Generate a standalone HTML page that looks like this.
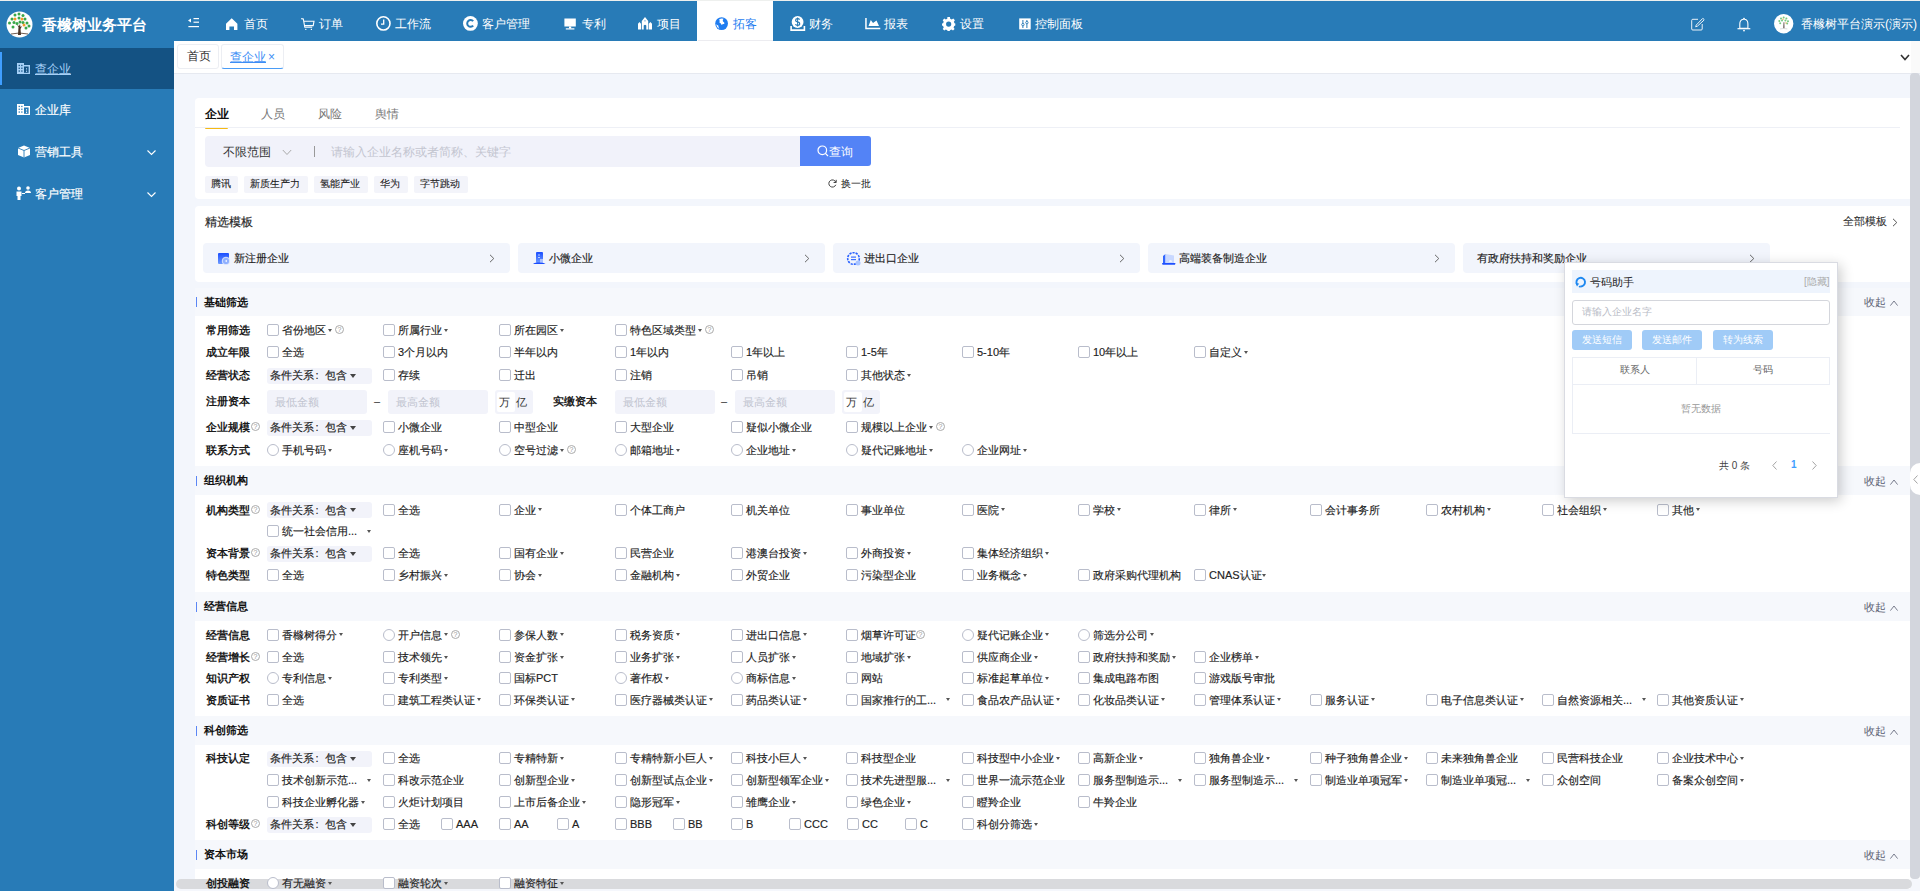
<!DOCTYPE html><html><head><meta charset="utf-8"><style>
html,body{margin:0;padding:0;width:1920px;height:891px;overflow:hidden;background:#f3f6fc;font-family:"Liberation Sans", sans-serif;}
.t{position:absolute;white-space:nowrap;z-index:2}
.r{position:absolute;}
.cr{position:absolute;z-index:2;width:0;height:0;border-left:2.6px solid transparent;border-right:2.6px solid transparent;border-top:3.6px solid #555;}
.hp{position:absolute;z-index:2;width:9px;height:9px;border:1px solid #aaa;border-radius:50%;box-sizing:border-box;font-size:7px;line-height:8px;text-align:center;color:#999;}
svg.r{overflow:visible}

</style></head><body>
<div class="r" style="left:0px;top:0px;width:1920px;height:41px;background:#287bb7"></div>
<div class="r" style="left:0px;top:0px;width:1920px;height:1px;background:#eef0ee"></div>
<div class="r" style="left:0px;top:41px;width:174px;height:850px;background:#287bb7"></div>
<svg class="r" style="left:6px;top:11px" width="27" height="27" viewBox="0 0 27 27">
<circle cx="13.5" cy="13.5" r="13" fill="#fff"/>
<g fill="#3aa74a"><circle cx="9" cy="4" r="1.5"/><circle cx="13" cy="3" r="1.5"/><circle cx="17" cy="4.5" r="1.5"/><circle cx="6" cy="8" r="1.5"/><circle cx="13" cy="7" r="1.5"/><circle cx="19" cy="8" r="1.5"/><circle cx="3.5" cy="12" r="1.5"/><circle cx="8" cy="11.5" r="1.5"/><circle cx="11" cy="12.5" r="1.5"/><circle cx="14" cy="11" r="1.5"/><circle cx="17" cy="11.5" r="1.5"/><circle cx="21" cy="12" r="1.5"/><circle cx="23" cy="15" r="1.5"/><circle cx="7" cy="16" r="1.5"/><circle cx="20" cy="17" r="1.5"/></g>
<g fill="#f39a2b"><circle cx="9" cy="8" r="1.5"/><circle cx="16" cy="8" r="1.5"/><circle cx="18" cy="14" r="1.5"/></g>
<path d="M12 24 L12.5 16 L11 14 L13 15 L14 13 L14.5 16 L16 15 L14.5 18 L15 24 Z" fill="#4b3426"/>
<path d="M5 23 Q13 21 22 23" stroke="#4b3426" stroke-width="0.8" fill="none"/>
</svg>
<div class="t" style="left:42px;top:15.0px;font-size:15px;line-height:20px;color:#fff;font-weight:bold;">香橼树业务平台</div>
<svg class="r" style="left:188px;top:18px" width="12" height="10" viewBox="0 0 12 10"><g fill="#fff"><path d="M0 2.6 L3 0.6 L3 4.6Z"/><rect x="5.5" y="0" width="5.5" height="1.2"/><rect x="5.5" y="3.6" width="5.5" height="1.2"/><rect x="0.4" y="8" width="10.6" height="1.2"/></g></svg>
<div class="r" style="left:697px;top:1px;width:76px;height:40px;background:#fff"></div>
<div class="r" style="left:698px;top:40px;width:75px;height:1px;background:#ececf0"></div>
<svg class="r" style="left:226px;top:17.6px" width="16" height="16" viewBox="0 0 16 16"><path d="M0 5.8 L5.7 0.3 L11.4 5.8 L11.4 12 L8 12 L8 8.6 L3.4 8.6 L3.4 12 L0 12 Z" fill="#fff"/></svg>
<div class="t" style="left:243.5px;top:13.5px;font-size:12px;line-height:20px;color:#fff;font-weight:normal;">首页</div>
<svg class="r" style="left:301px;top:17.6px" width="16" height="16" viewBox="0 0 16 16"><path d="M0.2 0.6 L2.3 0.9 L3.8 9.3 L11.2 9.3 M2.9 3.3 L13 3.3 L12.2 7.6 L3.5 7.6" fill="none" stroke="#fff" stroke-width="1.1"/><rect x="4.2" y="10.8" width="1.2" height="1.2" fill="#fff"/><rect x="9.8" y="10.8" width="1.2" height="1.2" fill="#fff"/></svg>
<div class="t" style="left:319.4px;top:13.5px;font-size:12px;line-height:20px;color:#fff;font-weight:normal;">订单</div>
<svg class="r" style="left:376px;top:16px" width="16" height="16" viewBox="0 0 16 16"><circle cx="7.4" cy="7.4" r="6.6" fill="none" stroke="#fff" stroke-width="1.6"/><path d="M7.7 3.6 L7.7 8.2 L5 8.2" fill="none" stroke="#fff" stroke-width="1.3"/></svg>
<div class="t" style="left:395.2px;top:13.5px;font-size:12px;line-height:20px;color:#fff;font-weight:normal;">工作流</div>
<svg class="r" style="left:463px;top:16px" width="16" height="16" viewBox="0 0 16 16"><circle cx="7.4" cy="7.4" r="7.4" fill="#fff"/><path d="M10.2 5.2 A3.4 3.4 0 1 0 10.2 9.6" fill="none" stroke="#287bb7" stroke-width="2"/></svg>
<div class="t" style="left:482px;top:13.5px;font-size:12px;line-height:20px;color:#fff;font-weight:normal;">客户管理</div>
<svg class="r" style="left:563.5px;top:17.6px" width="16" height="16" viewBox="0 0 16 16"><rect x="0.4" y="0.5" width="11.4" height="8" fill="#fff"/><rect x="5" y="8.5" width="2.2" height="2" fill="#fff"/><rect x="1.8" y="10.3" width="8.6" height="1.2" fill="#fff"/></svg>
<div class="t" style="left:581.6px;top:13.5px;font-size:12px;line-height:20px;color:#fff;font-weight:normal;">专利</div>
<svg class="r" style="left:638px;top:17px" width="16" height="16" viewBox="0 0 16 16"><path d="M0 12.4 L0 6.8 L1.5 5 L3 6.8 L3 12.4Z M10.8 12.4 L10.8 6.8 L12.4 4.9 L14 6.8 L14 12.4Z M3.8 12.4 L3.8 4 L7 0 L10.2 4 L10.2 12.4 L8.3 12.4 L8.3 8.5 Q7 7 5.7 8.5 L5.7 12.4Z" fill="#fff"/><path d="M7 2.8 L7.6 4.2 L6.4 4.2Z M6.4 3.4 L7.6 3.4 L7 4.8Z" fill="#287bb7"/></svg>
<div class="t" style="left:657.3px;top:13.5px;font-size:12px;line-height:20px;color:#fff;font-weight:normal;">项目</div>
<svg class="r" style="left:715px;top:17px" width="16" height="16" viewBox="0 0 16 16"><circle cx="6.6" cy="6.6" r="6.4" fill="#1e7cf0"/><path d="M1.1 7.3 Q1.6 10.6 4.6 12.3 Q3.2 10.2 3.3 8.6 Q2.1 8.1 1.1 7.3Z M4.2 2.3 Q6.2 1 8.6 1.8 Q7.2 3.1 8 4.4 Q9.8 4.9 9.3 7.1 Q7.7 6.6 6.7 8 Q5.6 6.1 4.4 5.6 Q5.1 4 4.2 2.3Z" fill="#fff"/></svg>
<div class="t" style="left:732.9px;top:13.5px;font-size:12px;line-height:20px;color:#1e7cf0;font-weight:normal;">拓客</div>
<svg class="r" style="left:789.5px;top:16px" width="16" height="16" viewBox="0 0 16 16"><circle cx="7.6" cy="6" r="5.9" fill="#fff"/><path d="M9.6 3.6 Q9 2.6 7.6 2.6 Q5.6 2.6 5.6 4.2 Q5.6 5.5 7.6 5.9 Q9.7 6.3 9.7 7.8 Q9.7 9.4 7.6 9.4 Q6 9.4 5.4 8.3" fill="none" stroke="#287bb7" stroke-width="1.2"/><path d="M7.6 1.5 L7.6 10.5" stroke="#287bb7" stroke-width="1"/><path d="M0.3 10 L0.3 14.9 L15.2 14.9 L15.2 10 L13.6 10 L13.6 13.3 L1.9 13.3 L1.9 10Z" fill="#fff"/></svg>
<div class="t" style="left:808.5px;top:13.5px;font-size:12px;line-height:20px;color:#fff;font-weight:normal;">财务</div>
<svg class="r" style="left:864.5px;top:17.6px" width="16" height="16" viewBox="0 0 16 16"><path d="M0.2 0 L1.7 0 L1.7 9.7 L15.3 9.7 L15.3 11.2 L0.2 11.2Z M3.5 8 L5.8 2 L8 5 L11.5 2.6 L14 8Z" fill="#fff"/></svg>
<div class="t" style="left:884px;top:13.5px;font-size:12px;line-height:20px;color:#fff;font-weight:normal;">报表</div>
<svg class="r" style="left:941.5px;top:17px" width="16" height="16" viewBox="0 0 16 16"><path d="M5.4 0 L7.9 0 L8.2 1.8 L9.8 2.6 L11.3 1.6 L12.9 3.2 L11.9 4.8 L12.5 6.3 L13.3 6.6 L13.3 8.6 L12.2 8.9 L11.6 10.4 L12.6 12 L11 13.6 L9.5 12.6 L8 13.2 L7.7 14.1 L5.6 14.1 L5.3 13.2 L3.8 12.6 L2.3 13.6 L0.7 12 L1.7 10.4 L1.1 8.9 L0 8.6 L0 6.6 L1.1 6.3 L1.7 4.8 L0.7 3.2 L2.3 1.6 L3.8 2.6 L5.3 1.8Z" fill="#fff"/><circle cx="6.65" cy="7.05" r="2.6" fill="#287bb7"/></svg>
<div class="t" style="left:959.8px;top:13.5px;font-size:12px;line-height:20px;color:#fff;font-weight:normal;">设置</div>
<svg class="r" style="left:1018.5px;top:17.6px" width="16" height="16" viewBox="0 0 16 16"><rect x="0.2" y="0.4" width="11.5" height="11" fill="#fff"/><path d="M3.9 2 L3.9 10 M7.9 2 L7.9 10" stroke="#287bb7" stroke-width="1"/><circle cx="3.9" cy="6.6" r="1.2" fill="#fff" stroke="#287bb7" stroke-width="0.9"/><circle cx="7.9" cy="4.6" r="1.2" fill="#fff" stroke="#287bb7" stroke-width="0.9"/></svg>
<div class="t" style="left:1035.4px;top:13.5px;font-size:12px;line-height:20px;color:#fff;font-weight:normal;">控制面板</div>
<svg class="r" style="left:1691px;top:18px" width="14" height="14" viewBox="0 0 14 14"><path d="M7 1.3 L1.8 1.3 Q0.7 1.3 0.7 2.4 L0.7 11 Q0.7 12 1.8 12 L10.2 12 Q11.2 12 11.2 11 L11.2 6" fill="none" stroke="#fff" stroke-width="1" opacity="0.9"/><path d="M12.2 0.6 L13 1.4 Q13.3 1.8 13 2.1 L6.4 8.2 L4.7 8.8 L5.2 7.1 L11.5 0.6 Q11.9 0.3 12.2 0.6Z" fill="none" stroke="#fff" stroke-width="0.9"/></svg>
<svg class="r" style="left:1736.5px;top:17.5px" width="14" height="14" viewBox="0 0 14 14"><path d="M7 0.3 L7.7 1.2 Q10.9 1.8 10.9 6 L10.9 10.2 L2.8 10.2 L2.8 6 Q2.8 1.8 6.3 1.2Z" fill="none" stroke="#fff" stroke-width="1.1"/><path d="M0.5 10.7 L13.3 10.7" stroke="#fff" stroke-width="1.2"/><circle cx="7" cy="12.6" r="0.9" fill="#fff"/></svg>
<svg class="r" style="left:1773.8px;top:14.4px" width="19.4" height="19.4" viewBox="0 0 19.4 19.4"><circle cx="9.7" cy="9.7" r="9.7" fill="#fff"/><g fill="#5fbf6a" opacity="0.85"><circle cx="7" cy="4.5" r="1"/><circle cx="9.7" cy="3.6" r="1"/><circle cx="12.4" cy="4.5" r="1"/><circle cx="5.3" cy="7" r="1"/><circle cx="8" cy="6.6" r="1"/><circle cx="11.4" cy="6.6" r="1"/><circle cx="14" cy="7.2" r="1"/><circle cx="6.2" cy="9.3" r="1"/><circle cx="13.2" cy="9.5" r="1"/></g><g fill="#f39a2b" opacity="0.8"><circle cx="9" cy="5.2" r="0.7"/><circle cx="12" cy="9" r="0.7"/></g><path d="M9.4 14.3 L9.6 8.2 L10.3 8.2 L10.4 14.3Z" fill="#3b2a20"/><path d="M6 15 Q9.7 14 13.4 15" stroke="#bbb" stroke-width="0.5" fill="none"/></svg>
<div class="t" style="left:1801px;top:13.5px;font-size:12px;line-height:20px;color:#fff;font-weight:normal;">香橼树平台演示(演示)</div>
<div class="r" style="left:174px;top:41px;width:1746px;height:32px;background:#fff"></div>
<div class="r" style="left:174px;top:73px;width:1746px;height:1px;background:#e6e9f0"></div>
<div class="r" style="left:177px;top:44px;width:41.5px;height:24.5px;border:1px solid #eceef3;border-radius:3px;box-sizing:border-box"></div>
<div class="t" style="left:187px;top:46.0px;font-size:12px;line-height:20px;color:#333;font-weight:normal;">首页</div>
<div class="r" style="left:220.5px;top:44px;width:63px;height:24.5px;border:1px solid #eceef3;border-radius:3px;box-sizing:border-box;border-bottom:1.6px solid #4a9cf6"></div>
<div class="t" style="left:230px;top:46.5px;font-size:12px;line-height:20px;color:#3d8ef5;font-weight:normal;"><span style="text-decoration:underline">查企业</span></div>
<div class="t" style="left:268px;top:46.5px;font-size:12px;line-height:20px;color:#3d8ef5;font-weight:normal;">×</div>
<svg class="r" style="left:1900px;top:54px" width="10" height="7" viewBox="0 0 10 7"><path d="M1 1 L5 5.5 L9 1" fill="none" stroke="#333" stroke-width="1.6"/></svg>
<div class="r" style="left:0px;top:48px;width:174px;height:41px;background:#145283"></div>
<div class="r" style="left:0px;top:52px;width:2px;height:33px;background:#409eff"></div>
<svg class="r" style="left:17px;top:63px" width="14" height="12" viewBox="0 0 14 12"><path d="M0 0 L7 0 L7 2 L13 2 L13 11 L0 11Z" fill="#a6d0f7"/><g fill="#145283"><rect x="1.6" y="1.8" width="1.3" height="1.3"/><rect x="4.2" y="1.8" width="1.3" height="1.3"/><rect x="1.6" y="4.6" width="1.3" height="1.3"/><rect x="4.2" y="4.6" width="1.3" height="1.3"/><rect x="1.6" y="7.4" width="1.3" height="1.3"/><rect x="4.2" y="7.4" width="1.3" height="1.3"/><rect x="7" y="3.5" width="4.6" height="6.3"/></g><rect x="9" y="5.2" width="1.1" height="1.3" fill="#a6d0f7"/><rect x="9" y="7.6" width="1.1" height="1.3" fill="#a6d0f7"/></svg>
<div class="t" style="left:35px;top:58.5px;font-size:12px;line-height:20px;color:#a6d0f7;font-weight:normal;"><span style="text-decoration:underline;text-decoration-thickness:1px;text-underline-offset:1px">查企业</span></div>
<svg class="r" style="left:17px;top:104px" width="14" height="12" viewBox="0 0 14 12"><path d="M0 0 L7 0 L7 2 L13 2 L13 11 L0 11Z" fill="#fff"/><g fill="#287bb7"><rect x="1.6" y="1.8" width="1.3" height="1.3"/><rect x="4.2" y="1.8" width="1.3" height="1.3"/><rect x="1.6" y="4.6" width="1.3" height="1.3"/><rect x="4.2" y="4.6" width="1.3" height="1.3"/><rect x="1.6" y="7.4" width="1.3" height="1.3"/><rect x="4.2" y="7.4" width="1.3" height="1.3"/><rect x="7" y="3.5" width="4.6" height="6.3"/></g><rect x="9" y="5.2" width="1.1" height="1.3" fill="#fff"/><rect x="9" y="7.6" width="1.1" height="1.3" fill="#fff"/></svg>
<div class="t" style="left:35px;top:99.5px;font-size:12px;line-height:20px;color:#fff;font-weight:normal;-webkit-text-stroke:0.15px #fff;">企业库</div>
<svg class="r" style="left:17px;top:145px" width="14" height="13" viewBox="0 0 14 13"><path d="M1 3 L7 0.5 L13 3 L13 10 L7 12.5 L1 10Z" fill="#fff"/><path d="M1 3 L7 5.5 L13 3 M7 5.5 L7 12.5" stroke="#287bb7" stroke-width="0.9" fill="none"/></svg>
<div class="t" style="left:35px;top:141.5px;font-size:12px;line-height:20px;color:#fff;font-weight:normal;-webkit-text-stroke:0.15px #fff;">营销工具</div>
<svg class="r" style="left:16px;top:186px" width="15" height="14" viewBox="0 0 15 14"><circle cx="3" cy="2.5" r="2" fill="#fff"/><path d="M0.5 5.5 L5.5 5.5 L5.5 10 L4.5 10 L4.5 14 L1.5 14 L1.5 10 L0.5 10Z" fill="#fff"/><circle cx="12" cy="2" r="1.8" fill="#fff"/><path d="M9 7 Q9 4.5 12 4.5 Q15 4.5 15 7Z" fill="#fff"/><path d="M6 7.5 L9 7.5" stroke="#fff" stroke-width="1"/></svg>
<div class="t" style="left:35px;top:184.0px;font-size:12px;line-height:20px;color:#fff;font-weight:normal;-webkit-text-stroke:0.15px #fff;">客户管理</div>
<svg class="r" style="left:147px;top:149.5px" width="9" height="5" viewBox="0 0 9 5"><path d="M0.5 0.5 L4.5 4.5 L8.5 0.5" fill="none" stroke="#fff" stroke-width="1.1"/></svg>
<svg class="r" style="left:147px;top:191.5px" width="9" height="5" viewBox="0 0 9 5"><path d="M0.5 0.5 L4.5 4.5 L8.5 0.5" fill="none" stroke="#fff" stroke-width="1.1"/></svg>
<div class="r" style="left:195px;top:98px;width:1725px;height:101px;background:#fff;border-radius:4px"></div>
<div class="t" style="left:205px;top:103.5px;font-size:12px;line-height:20px;color:#111;font-weight:bold;">企业</div>
<div class="r" style="left:205px;top:126.6px;width:23px;height:2.4px;background:#f5b914;border-radius:1px"></div>
<div class="t" style="left:261px;top:103.5px;font-size:12px;line-height:20px;color:#777;font-weight:normal;">人员</div>
<div class="t" style="left:317.5px;top:103.5px;font-size:12px;line-height:20px;color:#777;font-weight:normal;">风险</div>
<div class="t" style="left:374.5px;top:103.5px;font-size:12px;line-height:20px;color:#777;font-weight:normal;">舆情</div>
<div class="r" style="left:195px;top:126.5px;width:1705px;height:1px;background:#eef0f6"></div>
<div class="r" style="left:205px;top:136px;width:595px;height:31px;background:#f1f2fa;border-radius:4px 0 0 4px"></div>
<div class="t" style="left:223px;top:141.5px;font-size:12px;line-height:20px;color:#333;font-weight:normal;">不限范围</div>
<svg class="r" style="left:281.5px;top:148.5px" width="10" height="7" viewBox="0 0 10 7"><path d="M0.8 1 L5 5.5 L9.2 1" fill="none" stroke="#aaa" stroke-width="1"/></svg>
<div class="r" style="left:314px;top:145.5px;width:1px;height:11.5px;background:#999"></div>
<div class="t" style="left:331px;top:141.5px;font-size:12px;line-height:20px;color:#c3c5d0;font-weight:normal;">请输入企业名称或者简称、关键字</div>
<div class="r" style="left:800px;top:136px;width:71px;height:30px;background:#5383f6;border-radius:0 3px 3px 0"></div>
<svg class="r" style="left:817px;top:145px" width="12" height="12" viewBox="0 0 12 12"><circle cx="5.3" cy="5.3" r="4.3" fill="none" stroke="#fff" stroke-width="1.2"/><path d="M8.4 8.4 L11 11" stroke="#fff" stroke-width="1.2"/></svg>
<div class="t" style="left:829px;top:141.5px;font-size:12px;line-height:20px;color:#fff;font-weight:normal;">查询</div>
<div class="r" style="left:205px;top:176px;width:33px;height:17px;background:#f3f4fa;border-radius:2px"></div>
<div class="t" style="left:211px;top:173.5px;font-size:10px;line-height:20px;color:#222;font-weight:normal;-webkit-text-stroke:0.1px #222;">腾讯</div>
<div class="r" style="left:244px;top:176px;width:64px;height:17px;background:#f3f4fa;border-radius:2px"></div>
<div class="t" style="left:250px;top:173.5px;font-size:10px;line-height:20px;color:#222;font-weight:normal;-webkit-text-stroke:0.1px #222;">新质生产力</div>
<div class="r" style="left:314px;top:176px;width:54px;height:17px;background:#f3f4fa;border-radius:2px"></div>
<div class="t" style="left:320px;top:173.5px;font-size:10px;line-height:20px;color:#222;font-weight:normal;-webkit-text-stroke:0.1px #222;">氢能产业</div>
<div class="r" style="left:374px;top:176px;width:34px;height:17px;background:#f3f4fa;border-radius:2px"></div>
<div class="t" style="left:380px;top:173.5px;font-size:10px;line-height:20px;color:#222;font-weight:normal;-webkit-text-stroke:0.1px #222;">华为</div>
<div class="r" style="left:414px;top:176px;width:54px;height:17px;background:#f3f4fa;border-radius:2px"></div>
<div class="t" style="left:420px;top:173.5px;font-size:10px;line-height:20px;color:#222;font-weight:normal;-webkit-text-stroke:0.1px #222;">字节跳动</div>
<svg class="r" style="left:828px;top:178.5px" width="9" height="9" viewBox="0 0 9 9"><path d="M7.8 3.2 A3.6 3.6 0 1 0 7.8 5.8" fill="none" stroke="#444" stroke-width="1"/><path d="M8.2 0.8 L8.2 3.5 L5.6 3.5" fill="none" stroke="#444" stroke-width="1"/></svg>
<div class="t" style="left:841px;top:173.5px;font-size:10px;line-height:20px;color:#222;font-weight:normal;">换一批</div>
<div class="r" style="left:195px;top:206px;width:1725px;height:76px;background:#fff;border-radius:4px"></div>
<div class="t" style="left:204.5px;top:211.5px;font-size:12px;line-height:20px;color:#2a2a2a;font-weight:normal;-webkit-text-stroke:0.2px #2a2a2a;">精选模板</div>
<div class="t" style="left:1843px;top:211.0px;font-size:10.5px;line-height:20px;color:#333;font-weight:normal;-webkit-text-stroke:0.1px #333;">全部模板</div>
<svg class="r" style="left:1892px;top:217.5px" width="6" height="9" viewBox="0 0 6 9"><path d="M1 0.8 L4.8 4.5 L1 8.2" fill="none" stroke="#555" stroke-width="1"/></svg>
<div class="r" style="left:203px;top:243px;width:307px;height:29.5px;background:#f2f5fc;border-radius:4px"></div>
<svg class="r" style="left:217px;top:252px" width="14" height="13" viewBox="0 0 14 13"><defs><linearGradient id="g1" x1="0" y1="0" x2="0" y2="1"><stop offset="0" stop-color="#1a4dff"/><stop offset="1" stop-color="#6f9cff"/></linearGradient></defs><rect x="1" y="1" width="11" height="11" rx="1" fill="url(#g1)"/><circle cx="9" cy="9" r="3.8" fill="#8fb0ff" stroke="#f2f5fc" stroke-width="0.8"/><path d="M9.8 7.8 L8 9 L9.8 10.2Z" fill="#fff"/></svg>
<div class="t" style="left:233.5px;top:248.0px;font-size:11px;line-height:20px;color:#222;font-weight:normal;-webkit-text-stroke:0.15px #222;">新注册企业</div>
<svg class="r" style="left:489px;top:254px" width="6" height="9" viewBox="0 0 6 9"><path d="M1 0.8 L4.8 4.5 L1 8.2" fill="none" stroke="#666" stroke-width="1"/></svg>
<div class="r" style="left:518px;top:243px;width:307px;height:29.5px;background:#f2f5fc;border-radius:4px"></div>
<svg class="r" style="left:532px;top:252px" width="14" height="13" viewBox="0 0 14 13"><defs><linearGradient id="g2" x1="0" y1="0" x2="0" y2="1"><stop offset="0" stop-color="#1a4dff"/><stop offset="1" stop-color="#6f9cff"/></linearGradient></defs><rect x="4" y="0" width="7" height="11" rx="1" fill="url(#g2)"/><rect x="6" y="2.5" width="2" height="1" fill="#bcd0ff"/><rect x="6" y="5" width="2" height="1" fill="#bcd0ff"/><path d="M1 12 Q2 10.5 5 10.5 L9 10.5 Q12 10.5 13.5 12 Z" fill="#1a4dff"/><rect x="8" y="7" width="3" height="3.5" fill="#a9c0ff"/></svg>
<div class="t" style="left:548.5px;top:248.0px;font-size:11px;line-height:20px;color:#222;font-weight:normal;-webkit-text-stroke:0.15px #222;">小微企业</div>
<svg class="r" style="left:804px;top:254px" width="6" height="9" viewBox="0 0 6 9"><path d="M1 0.8 L4.8 4.5 L1 8.2" fill="none" stroke="#666" stroke-width="1"/></svg>
<div class="r" style="left:833px;top:243px;width:307px;height:29.5px;background:#f2f5fc;border-radius:4px"></div>
<svg class="r" style="left:847px;top:252px" width="14" height="13" viewBox="0 0 14 13"><circle cx="6.5" cy="6.5" r="5.8" fill="none" stroke="#2a62ff" stroke-width="1.6" stroke-dasharray="2.2 1"/><rect x="4" y="4.5" width="5" height="1.2" fill="#3b6fff"/><rect x="4" y="7" width="5" height="1.2" fill="#3b6fff"/><circle cx="11" cy="11" r="2.5" fill="#a9c4ff"/></svg>
<div class="t" style="left:863.5px;top:248.0px;font-size:11px;line-height:20px;color:#222;font-weight:normal;-webkit-text-stroke:0.15px #222;">进出口企业</div>
<svg class="r" style="left:1119px;top:254px" width="6" height="9" viewBox="0 0 6 9"><path d="M1 0.8 L4.8 4.5 L1 8.2" fill="none" stroke="#666" stroke-width="1"/></svg>
<div class="r" style="left:1148px;top:243px;width:307px;height:29.5px;background:#f2f5fc;border-radius:4px"></div>
<svg class="r" style="left:1162px;top:252px" width="14" height="13" viewBox="0 0 14 13"><path d="M1 12 L1 4 L3.5 2 L3.5 12Z" fill="#3166ff"/><path d="M3.5 2 L12 3.5 L12 12 L3.5 12Z" fill="#c9d8ff"/><path d="M7 10 Q7 8 8.5 8 Q10 8 10 10Z" fill="#eef3ff"/><path d="M0 11 L13.5 11 L13 12.8 L0.5 12.8Z" fill="#1e4fff"/></svg>
<div class="t" style="left:1178.5px;top:248.0px;font-size:11px;line-height:20px;color:#222;font-weight:normal;-webkit-text-stroke:0.15px #222;">高端装备制造企业</div>
<svg class="r" style="left:1434px;top:254px" width="6" height="9" viewBox="0 0 6 9"><path d="M1 0.8 L4.8 4.5 L1 8.2" fill="none" stroke="#666" stroke-width="1"/></svg>
<div class="r" style="left:1463px;top:243px;width:307px;height:29.5px;background:#f2f5fc;border-radius:4px"></div>
<div class="t" style="left:1477px;top:248.0px;font-size:11px;line-height:20px;color:#222;font-weight:normal;-webkit-text-stroke:0.15px #222;">有政府扶持和奖励企业</div>
<svg class="r" style="left:1749px;top:254px" width="6" height="9" viewBox="0 0 6 9"><path d="M1 0.8 L4.8 4.5 L1 8.2" fill="none" stroke="#666" stroke-width="1"/></svg>
<div class="r" style="left:195px;top:287.5px;width:1725px;height:29px;background:#f6f8fc"></div>
<div class="r" style="left:196px;top:297.0px;width:1px;height:10px;background:#5b86f5"></div>
<div class="t" style="left:204px;top:291.5px;font-size:11px;line-height:20px;color:#111;font-weight:bold;">基础筛选</div>
<div class="t" style="left:1864px;top:292.0px;font-size:11px;line-height:20px;color:#5d6173;font-weight:normal;">收起</div>
<svg class="r" style="left:1889.5px;top:300.0px" width="8" height="6" viewBox="0 0 8 6"><path d="M0.4 5.6 L4 1 L7.6 5.6" fill="none" stroke="#6a6e80" stroke-width="0.9"/></svg>
<div class="r" style="left:195px;top:316px;width:1725px;height:150px;background:#fff"></div>
<div class="t" style="left:205.8px;top:320.0px;font-size:11px;line-height:20px;color:#1a1a1a;font-weight:bold;">常用筛选</div>
<div class="r" style="left:267px;top:324px;width:12px;height:12px;border:1px solid #b9bdcb;border-radius:2px;box-sizing:border-box;background:#fff;z-index:2"></div>
<div class="t" style="left:282px;top:320.0px;font-size:11px;line-height:20px;color:#222;font-weight:normal;-webkit-text-stroke:0.15px #222;">省份地区</div>
<div class="cr" style="left:328px;top:328.8px;border-top-color:#555"></div>
<div class="hp" style="left:335px;top:325px">?</div>
<div class="r" style="left:383px;top:324px;width:12px;height:12px;border:1px solid #b9bdcb;border-radius:2px;box-sizing:border-box;background:#fff;z-index:2"></div>
<div class="t" style="left:398px;top:320.0px;font-size:11px;line-height:20px;color:#222;font-weight:normal;-webkit-text-stroke:0.15px #222;">所属行业</div>
<div class="cr" style="left:444px;top:328.8px;border-top-color:#555"></div>
<div class="r" style="left:499px;top:324px;width:12px;height:12px;border:1px solid #b9bdcb;border-radius:2px;box-sizing:border-box;background:#fff;z-index:2"></div>
<div class="t" style="left:514px;top:320.0px;font-size:11px;line-height:20px;color:#222;font-weight:normal;-webkit-text-stroke:0.15px #222;">所在园区</div>
<div class="cr" style="left:560px;top:328.8px;border-top-color:#555"></div>
<div class="r" style="left:615px;top:324px;width:12px;height:12px;border:1px solid #b9bdcb;border-radius:2px;box-sizing:border-box;background:#fff;z-index:2"></div>
<div class="t" style="left:630px;top:320.0px;font-size:11px;line-height:20px;color:#222;font-weight:normal;-webkit-text-stroke:0.15px #222;">特色区域类型</div>
<div class="cr" style="left:698px;top:328.8px;border-top-color:#555"></div>
<div class="hp" style="left:705px;top:325px">?</div>
<div class="t" style="left:205.8px;top:342.0px;font-size:11px;line-height:20px;color:#1a1a1a;font-weight:bold;">成立年限</div>
<div class="r" style="left:267px;top:346px;width:12px;height:12px;border:1px solid #b9bdcb;border-radius:2px;box-sizing:border-box;background:#fff;z-index:2"></div>
<div class="t" style="left:282px;top:342.0px;font-size:11px;line-height:20px;color:#222;font-weight:normal;-webkit-text-stroke:0.15px #222;">全选</div>
<div class="r" style="left:383px;top:346px;width:12px;height:12px;border:1px solid #b9bdcb;border-radius:2px;box-sizing:border-box;background:#fff;z-index:2"></div>
<div class="t" style="left:398px;top:342.0px;font-size:11px;line-height:20px;color:#222;font-weight:normal;-webkit-text-stroke:0.15px #222;">3个月以内</div>
<div class="r" style="left:499px;top:346px;width:12px;height:12px;border:1px solid #b9bdcb;border-radius:2px;box-sizing:border-box;background:#fff;z-index:2"></div>
<div class="t" style="left:514px;top:342.0px;font-size:11px;line-height:20px;color:#222;font-weight:normal;-webkit-text-stroke:0.15px #222;">半年以内</div>
<div class="r" style="left:615px;top:346px;width:12px;height:12px;border:1px solid #b9bdcb;border-radius:2px;box-sizing:border-box;background:#fff;z-index:2"></div>
<div class="t" style="left:630px;top:342.0px;font-size:11px;line-height:20px;color:#222;font-weight:normal;-webkit-text-stroke:0.15px #222;">1年以内</div>
<div class="r" style="left:731px;top:346px;width:12px;height:12px;border:1px solid #b9bdcb;border-radius:2px;box-sizing:border-box;background:#fff;z-index:2"></div>
<div class="t" style="left:746px;top:342.0px;font-size:11px;line-height:20px;color:#222;font-weight:normal;-webkit-text-stroke:0.15px #222;">1年以上</div>
<div class="r" style="left:846px;top:346px;width:12px;height:12px;border:1px solid #b9bdcb;border-radius:2px;box-sizing:border-box;background:#fff;z-index:2"></div>
<div class="t" style="left:861px;top:342.0px;font-size:11px;line-height:20px;color:#222;font-weight:normal;-webkit-text-stroke:0.15px #222;">1-5年</div>
<div class="r" style="left:962px;top:346px;width:12px;height:12px;border:1px solid #b9bdcb;border-radius:2px;box-sizing:border-box;background:#fff;z-index:2"></div>
<div class="t" style="left:977px;top:342.0px;font-size:11px;line-height:20px;color:#222;font-weight:normal;-webkit-text-stroke:0.15px #222;">5-10年</div>
<div class="r" style="left:1078px;top:346px;width:12px;height:12px;border:1px solid #b9bdcb;border-radius:2px;box-sizing:border-box;background:#fff;z-index:2"></div>
<div class="t" style="left:1093px;top:342.0px;font-size:11px;line-height:20px;color:#222;font-weight:normal;-webkit-text-stroke:0.15px #222;">10年以上</div>
<div class="r" style="left:1194px;top:346px;width:12px;height:12px;border:1px solid #b9bdcb;border-radius:2px;box-sizing:border-box;background:#fff;z-index:2"></div>
<div class="t" style="left:1209px;top:342.0px;font-size:11px;line-height:20px;color:#222;font-weight:normal;-webkit-text-stroke:0.15px #222;">自定义</div>
<div class="cr" style="left:1244px;top:350.8px;border-top-color:#555"></div>
<div class="t" style="left:205.8px;top:365.0px;font-size:11px;line-height:20px;color:#1a1a1a;font-weight:bold;">经营状态</div>
<div class="r" style="left:267px;top:367.5px;width:105px;height:16.2px;background:#f2f3fa;border-radius:3px"></div>
<div class="t" style="left:270px;top:365.0px;font-size:11px;line-height:20px;color:#222;font-weight:normal;-webkit-text-stroke:0.15px #222;">条件关系<span style="display:inline-block;width:11px;text-indent:1.5px">:</span>包含</div>
<div class="cr" style="left:350px;top:373.5px;border-top-color:#444;border-left-width:3px;border-right-width:3px;border-top-width:4px"></div>
<div class="r" style="left:383px;top:369px;width:12px;height:12px;border:1px solid #b9bdcb;border-radius:2px;box-sizing:border-box;background:#fff;z-index:2"></div>
<div class="t" style="left:398px;top:365.0px;font-size:11px;line-height:20px;color:#222;font-weight:normal;-webkit-text-stroke:0.15px #222;">存续</div>
<div class="r" style="left:499px;top:369px;width:12px;height:12px;border:1px solid #b9bdcb;border-radius:2px;box-sizing:border-box;background:#fff;z-index:2"></div>
<div class="t" style="left:514px;top:365.0px;font-size:11px;line-height:20px;color:#222;font-weight:normal;-webkit-text-stroke:0.15px #222;">迁出</div>
<div class="r" style="left:615px;top:369px;width:12px;height:12px;border:1px solid #b9bdcb;border-radius:2px;box-sizing:border-box;background:#fff;z-index:2"></div>
<div class="t" style="left:630px;top:365.0px;font-size:11px;line-height:20px;color:#222;font-weight:normal;-webkit-text-stroke:0.15px #222;">注销</div>
<div class="r" style="left:731px;top:369px;width:12px;height:12px;border:1px solid #b9bdcb;border-radius:2px;box-sizing:border-box;background:#fff;z-index:2"></div>
<div class="t" style="left:746px;top:365.0px;font-size:11px;line-height:20px;color:#222;font-weight:normal;-webkit-text-stroke:0.15px #222;">吊销</div>
<div class="r" style="left:846px;top:369px;width:12px;height:12px;border:1px solid #b9bdcb;border-radius:2px;box-sizing:border-box;background:#fff;z-index:2"></div>
<div class="t" style="left:861px;top:365.0px;font-size:11px;line-height:20px;color:#222;font-weight:normal;-webkit-text-stroke:0.15px #222;">其他状态</div>
<div class="cr" style="left:907px;top:373.8px;border-top-color:#555"></div>
<div class="t" style="left:205.8px;top:391.0px;font-size:11px;line-height:20px;color:#1a1a1a;font-weight:bold;">注册资本</div>
<div class="r" style="left:267px;top:390px;width:100px;height:23.5px;background:#f2f3fa;border-radius:3px"></div>
<div class="t" style="left:275px;top:391.5px;font-size:11px;line-height:20px;color:#c0c3cf;font-weight:normal;">最低金额</div>
<div class="t" style="left:374px;top:391.0px;font-size:11px;line-height:20px;color:#333;font-weight:normal;">–</div>
<div class="r" style="left:388px;top:390px;width:100px;height:23.5px;background:#f2f3fa;border-radius:3px"></div>
<div class="t" style="left:396px;top:391.5px;font-size:11px;line-height:20px;color:#c0c3cf;font-weight:normal;">最高金额</div>
<div class="r" style="left:495px;top:390px;width:38px;height:23.5px;background:#f2f3fa;border-radius:3px"></div>
<div class="r" style="left:496.5px;top:391.5px;width:18px;height:20.5px;background:#fff;border-radius:2px"></div>
<div class="t" style="left:499px;top:391.5px;font-size:11px;line-height:20px;color:#333;font-weight:normal;">万</div>
<div class="t" style="left:516px;top:391.5px;font-size:11px;line-height:20px;color:#333;font-weight:normal;">亿</div>
<div class="t" style="left:553px;top:390.5px;font-size:11px;line-height:20px;color:#222;font-weight:bold;">实缴资本</div>
<div class="r" style="left:614.5px;top:390px;width:100px;height:23.5px;background:#f2f3fa;border-radius:3px"></div>
<div class="t" style="left:622.5px;top:391.5px;font-size:11px;line-height:20px;color:#c0c3cf;font-weight:normal;">最低金额</div>
<div class="t" style="left:721px;top:391.0px;font-size:11px;line-height:20px;color:#333;font-weight:normal;">–</div>
<div class="r" style="left:735px;top:390px;width:100px;height:23.5px;background:#f2f3fa;border-radius:3px"></div>
<div class="t" style="left:743px;top:391.5px;font-size:11px;line-height:20px;color:#c0c3cf;font-weight:normal;">最高金额</div>
<div class="r" style="left:842px;top:390px;width:38px;height:23.5px;background:#f2f3fa;border-radius:3px"></div>
<div class="r" style="left:843.5px;top:391.5px;width:18px;height:20.5px;background:#fff;border-radius:2px"></div>
<div class="t" style="left:846px;top:391.5px;font-size:11px;line-height:20px;color:#333;font-weight:normal;">万</div>
<div class="t" style="left:863px;top:391.5px;font-size:11px;line-height:20px;color:#333;font-weight:normal;">亿</div>
<div class="t" style="left:205.8px;top:417.0px;font-size:11px;line-height:20px;color:#1a1a1a;font-weight:bold;">企业规模</div>
<div class="hp" style="left:251px;top:422px">?</div>
<div class="r" style="left:267px;top:419.5px;width:105px;height:16.2px;background:#f2f3fa;border-radius:3px"></div>
<div class="t" style="left:270px;top:417.0px;font-size:11px;line-height:20px;color:#222;font-weight:normal;-webkit-text-stroke:0.15px #222;">条件关系<span style="display:inline-block;width:11px;text-indent:1.5px">:</span>包含</div>
<div class="cr" style="left:350px;top:425.5px;border-top-color:#444;border-left-width:3px;border-right-width:3px;border-top-width:4px"></div>
<div class="r" style="left:383px;top:421px;width:12px;height:12px;border:1px solid #b9bdcb;border-radius:2px;box-sizing:border-box;background:#fff;z-index:2"></div>
<div class="t" style="left:398px;top:417.0px;font-size:11px;line-height:20px;color:#222;font-weight:normal;-webkit-text-stroke:0.15px #222;">小微企业</div>
<div class="r" style="left:499px;top:421px;width:12px;height:12px;border:1px solid #b9bdcb;border-radius:2px;box-sizing:border-box;background:#fff;z-index:2"></div>
<div class="t" style="left:514px;top:417.0px;font-size:11px;line-height:20px;color:#222;font-weight:normal;-webkit-text-stroke:0.15px #222;">中型企业</div>
<div class="r" style="left:615px;top:421px;width:12px;height:12px;border:1px solid #b9bdcb;border-radius:2px;box-sizing:border-box;background:#fff;z-index:2"></div>
<div class="t" style="left:630px;top:417.0px;font-size:11px;line-height:20px;color:#222;font-weight:normal;-webkit-text-stroke:0.15px #222;">大型企业</div>
<div class="r" style="left:731px;top:421px;width:12px;height:12px;border:1px solid #b9bdcb;border-radius:2px;box-sizing:border-box;background:#fff;z-index:2"></div>
<div class="t" style="left:746px;top:417.0px;font-size:11px;line-height:20px;color:#222;font-weight:normal;-webkit-text-stroke:0.15px #222;">疑似小微企业</div>
<div class="r" style="left:846px;top:421px;width:12px;height:12px;border:1px solid #b9bdcb;border-radius:2px;box-sizing:border-box;background:#fff;z-index:2"></div>
<div class="t" style="left:861px;top:417.0px;font-size:11px;line-height:20px;color:#222;font-weight:normal;-webkit-text-stroke:0.15px #222;">规模以上企业</div>
<div class="cr" style="left:929px;top:425.8px;border-top-color:#555"></div>
<div class="hp" style="left:936px;top:422px">?</div>
<div class="t" style="left:205.8px;top:440.0px;font-size:11px;line-height:20px;color:#1a1a1a;font-weight:bold;">联系方式</div>
<div class="r" style="left:267px;top:444px;width:12px;height:12px;border:1px solid #b9bdcb;border-radius:50%;box-sizing:border-box;background:#fff;z-index:2"></div>
<div class="t" style="left:282px;top:440.0px;font-size:11px;line-height:20px;color:#222;font-weight:normal;-webkit-text-stroke:0.15px #222;">手机号码</div>
<div class="cr" style="left:328px;top:448.8px;border-top-color:#555"></div>
<div class="r" style="left:383px;top:444px;width:12px;height:12px;border:1px solid #b9bdcb;border-radius:50%;box-sizing:border-box;background:#fff;z-index:2"></div>
<div class="t" style="left:398px;top:440.0px;font-size:11px;line-height:20px;color:#222;font-weight:normal;-webkit-text-stroke:0.15px #222;">座机号码</div>
<div class="cr" style="left:444px;top:448.8px;border-top-color:#555"></div>
<div class="r" style="left:499px;top:444px;width:12px;height:12px;border:1px solid #b9bdcb;border-radius:50%;box-sizing:border-box;background:#fff;z-index:2"></div>
<div class="t" style="left:514px;top:440.0px;font-size:11px;line-height:20px;color:#222;font-weight:normal;-webkit-text-stroke:0.15px #222;">空号过滤</div>
<div class="cr" style="left:560px;top:448.8px;border-top-color:#555"></div>
<div class="hp" style="left:567px;top:445px">?</div>
<div class="r" style="left:615px;top:444px;width:12px;height:12px;border:1px solid #b9bdcb;border-radius:50%;box-sizing:border-box;background:#fff;z-index:2"></div>
<div class="t" style="left:630px;top:440.0px;font-size:11px;line-height:20px;color:#222;font-weight:normal;-webkit-text-stroke:0.15px #222;">邮箱地址</div>
<div class="cr" style="left:676px;top:448.8px;border-top-color:#555"></div>
<div class="r" style="left:731px;top:444px;width:12px;height:12px;border:1px solid #b9bdcb;border-radius:50%;box-sizing:border-box;background:#fff;z-index:2"></div>
<div class="t" style="left:746px;top:440.0px;font-size:11px;line-height:20px;color:#222;font-weight:normal;-webkit-text-stroke:0.15px #222;">企业地址</div>
<div class="cr" style="left:792px;top:448.8px;border-top-color:#555"></div>
<div class="r" style="left:846px;top:444px;width:12px;height:12px;border:1px solid #b9bdcb;border-radius:50%;box-sizing:border-box;background:#fff;z-index:2"></div>
<div class="t" style="left:861px;top:440.0px;font-size:11px;line-height:20px;color:#222;font-weight:normal;-webkit-text-stroke:0.15px #222;">疑代记账地址</div>
<div class="cr" style="left:929px;top:448.8px;border-top-color:#555"></div>
<div class="r" style="left:962px;top:444px;width:12px;height:12px;border:1px solid #b9bdcb;border-radius:50%;box-sizing:border-box;background:#fff;z-index:2"></div>
<div class="t" style="left:977px;top:440.0px;font-size:11px;line-height:20px;color:#222;font-weight:normal;-webkit-text-stroke:0.15px #222;">企业网址</div>
<div class="cr" style="left:1023px;top:448.8px;border-top-color:#555"></div>
<div class="r" style="left:195px;top:466px;width:1725px;height:29px;background:#f6f8fc"></div>
<div class="r" style="left:196px;top:475.5px;width:1px;height:10px;background:#5b86f5"></div>
<div class="t" style="left:204px;top:470.0px;font-size:11px;line-height:20px;color:#111;font-weight:bold;">组织机构</div>
<div class="t" style="left:1864px;top:470.5px;font-size:11px;line-height:20px;color:#5d6173;font-weight:normal;">收起</div>
<svg class="r" style="left:1889.5px;top:478.5px" width="8" height="6" viewBox="0 0 8 6"><path d="M0.4 5.6 L4 1 L7.6 5.6" fill="none" stroke="#6a6e80" stroke-width="0.9"/></svg>
<div class="r" style="left:195px;top:495px;width:1725px;height:97px;background:#fff"></div>
<div class="t" style="left:205.8px;top:499.5px;font-size:11px;line-height:20px;color:#1a1a1a;font-weight:bold;">机构类型</div>
<div class="hp" style="left:251px;top:504.5px">?</div>
<div class="r" style="left:267px;top:502.0px;width:105px;height:16.2px;background:#f2f3fa;border-radius:3px"></div>
<div class="t" style="left:270px;top:499.5px;font-size:11px;line-height:20px;color:#222;font-weight:normal;-webkit-text-stroke:0.15px #222;">条件关系<span style="display:inline-block;width:11px;text-indent:1.5px">:</span>包含</div>
<div class="cr" style="left:350px;top:508.0px;border-top-color:#444;border-left-width:3px;border-right-width:3px;border-top-width:4px"></div>
<div class="r" style="left:383px;top:503.5px;width:12px;height:12px;border:1px solid #b9bdcb;border-radius:2px;box-sizing:border-box;background:#fff;z-index:2"></div>
<div class="t" style="left:398px;top:499.5px;font-size:11px;line-height:20px;color:#222;font-weight:normal;-webkit-text-stroke:0.15px #222;">全选</div>
<div class="r" style="left:499px;top:503.5px;width:12px;height:12px;border:1px solid #b9bdcb;border-radius:2px;box-sizing:border-box;background:#fff;z-index:2"></div>
<div class="t" style="left:514px;top:499.5px;font-size:11px;line-height:20px;color:#222;font-weight:normal;-webkit-text-stroke:0.15px #222;">企业</div>
<div class="cr" style="left:538px;top:508.3px;border-top-color:#555"></div>
<div class="r" style="left:615px;top:503.5px;width:12px;height:12px;border:1px solid #b9bdcb;border-radius:2px;box-sizing:border-box;background:#fff;z-index:2"></div>
<div class="t" style="left:630px;top:499.5px;font-size:11px;line-height:20px;color:#222;font-weight:normal;-webkit-text-stroke:0.15px #222;">个体工商户</div>
<div class="r" style="left:731px;top:503.5px;width:12px;height:12px;border:1px solid #b9bdcb;border-radius:2px;box-sizing:border-box;background:#fff;z-index:2"></div>
<div class="t" style="left:746px;top:499.5px;font-size:11px;line-height:20px;color:#222;font-weight:normal;-webkit-text-stroke:0.15px #222;">机关单位</div>
<div class="r" style="left:846px;top:503.5px;width:12px;height:12px;border:1px solid #b9bdcb;border-radius:2px;box-sizing:border-box;background:#fff;z-index:2"></div>
<div class="t" style="left:861px;top:499.5px;font-size:11px;line-height:20px;color:#222;font-weight:normal;-webkit-text-stroke:0.15px #222;">事业单位</div>
<div class="r" style="left:962px;top:503.5px;width:12px;height:12px;border:1px solid #b9bdcb;border-radius:2px;box-sizing:border-box;background:#fff;z-index:2"></div>
<div class="t" style="left:977px;top:499.5px;font-size:11px;line-height:20px;color:#222;font-weight:normal;-webkit-text-stroke:0.15px #222;">医院</div>
<div class="cr" style="left:1001px;top:508.3px;border-top-color:#555"></div>
<div class="r" style="left:1078px;top:503.5px;width:12px;height:12px;border:1px solid #b9bdcb;border-radius:2px;box-sizing:border-box;background:#fff;z-index:2"></div>
<div class="t" style="left:1093px;top:499.5px;font-size:11px;line-height:20px;color:#222;font-weight:normal;-webkit-text-stroke:0.15px #222;">学校</div>
<div class="cr" style="left:1117px;top:508.3px;border-top-color:#555"></div>
<div class="r" style="left:1194px;top:503.5px;width:12px;height:12px;border:1px solid #b9bdcb;border-radius:2px;box-sizing:border-box;background:#fff;z-index:2"></div>
<div class="t" style="left:1209px;top:499.5px;font-size:11px;line-height:20px;color:#222;font-weight:normal;-webkit-text-stroke:0.15px #222;">律所</div>
<div class="cr" style="left:1233px;top:508.3px;border-top-color:#555"></div>
<div class="r" style="left:1310px;top:503.5px;width:12px;height:12px;border:1px solid #b9bdcb;border-radius:2px;box-sizing:border-box;background:#fff;z-index:2"></div>
<div class="t" style="left:1325px;top:499.5px;font-size:11px;line-height:20px;color:#222;font-weight:normal;-webkit-text-stroke:0.15px #222;">会计事务所</div>
<div class="r" style="left:1426px;top:503.5px;width:12px;height:12px;border:1px solid #b9bdcb;border-radius:2px;box-sizing:border-box;background:#fff;z-index:2"></div>
<div class="t" style="left:1441px;top:499.5px;font-size:11px;line-height:20px;color:#222;font-weight:normal;-webkit-text-stroke:0.15px #222;">农村机构</div>
<div class="cr" style="left:1487px;top:508.3px;border-top-color:#555"></div>
<div class="r" style="left:1542px;top:503.5px;width:12px;height:12px;border:1px solid #b9bdcb;border-radius:2px;box-sizing:border-box;background:#fff;z-index:2"></div>
<div class="t" style="left:1557px;top:499.5px;font-size:11px;line-height:20px;color:#222;font-weight:normal;-webkit-text-stroke:0.15px #222;">社会组织</div>
<div class="cr" style="left:1603px;top:508.3px;border-top-color:#555"></div>
<div class="r" style="left:1657px;top:503.5px;width:12px;height:12px;border:1px solid #b9bdcb;border-radius:2px;box-sizing:border-box;background:#fff;z-index:2"></div>
<div class="t" style="left:1672px;top:499.5px;font-size:11px;line-height:20px;color:#222;font-weight:normal;-webkit-text-stroke:0.15px #222;">其他</div>
<div class="cr" style="left:1696px;top:508.3px;border-top-color:#555"></div>
<div class="r" style="left:267px;top:525px;width:12px;height:12px;border:1px solid #b9bdcb;border-radius:2px;box-sizing:border-box;background:#fff;z-index:2"></div>
<div class="t" style="left:282px;top:521.0px;font-size:11px;line-height:20px;color:#222;font-weight:normal;-webkit-text-stroke:0.15px #222;">统一社会信用...</div>
<div class="cr" style="left:366.5px;top:529.8px;border-top-color:#555"></div>
<div class="t" style="left:205.8px;top:543.0px;font-size:11px;line-height:20px;color:#1a1a1a;font-weight:bold;">资本背景</div>
<div class="hp" style="left:251px;top:548px">?</div>
<div class="r" style="left:267px;top:545.5px;width:105px;height:16.2px;background:#f2f3fa;border-radius:3px"></div>
<div class="t" style="left:270px;top:543.0px;font-size:11px;line-height:20px;color:#222;font-weight:normal;-webkit-text-stroke:0.15px #222;">条件关系<span style="display:inline-block;width:11px;text-indent:1.5px">:</span>包含</div>
<div class="cr" style="left:350px;top:551.5px;border-top-color:#444;border-left-width:3px;border-right-width:3px;border-top-width:4px"></div>
<div class="r" style="left:383px;top:547px;width:12px;height:12px;border:1px solid #b9bdcb;border-radius:2px;box-sizing:border-box;background:#fff;z-index:2"></div>
<div class="t" style="left:398px;top:543.0px;font-size:11px;line-height:20px;color:#222;font-weight:normal;-webkit-text-stroke:0.15px #222;">全选</div>
<div class="r" style="left:499px;top:547px;width:12px;height:12px;border:1px solid #b9bdcb;border-radius:2px;box-sizing:border-box;background:#fff;z-index:2"></div>
<div class="t" style="left:514px;top:543.0px;font-size:11px;line-height:20px;color:#222;font-weight:normal;-webkit-text-stroke:0.15px #222;">国有企业</div>
<div class="cr" style="left:560px;top:551.8px;border-top-color:#555"></div>
<div class="r" style="left:615px;top:547px;width:12px;height:12px;border:1px solid #b9bdcb;border-radius:2px;box-sizing:border-box;background:#fff;z-index:2"></div>
<div class="t" style="left:630px;top:543.0px;font-size:11px;line-height:20px;color:#222;font-weight:normal;-webkit-text-stroke:0.15px #222;">民营企业</div>
<div class="r" style="left:731px;top:547px;width:12px;height:12px;border:1px solid #b9bdcb;border-radius:2px;box-sizing:border-box;background:#fff;z-index:2"></div>
<div class="t" style="left:746px;top:543.0px;font-size:11px;line-height:20px;color:#222;font-weight:normal;-webkit-text-stroke:0.15px #222;">港澳台投资</div>
<div class="cr" style="left:803px;top:551.8px;border-top-color:#555"></div>
<div class="r" style="left:846px;top:547px;width:12px;height:12px;border:1px solid #b9bdcb;border-radius:2px;box-sizing:border-box;background:#fff;z-index:2"></div>
<div class="t" style="left:861px;top:543.0px;font-size:11px;line-height:20px;color:#222;font-weight:normal;-webkit-text-stroke:0.15px #222;">外商投资</div>
<div class="cr" style="left:907px;top:551.8px;border-top-color:#555"></div>
<div class="r" style="left:962px;top:547px;width:12px;height:12px;border:1px solid #b9bdcb;border-radius:2px;box-sizing:border-box;background:#fff;z-index:2"></div>
<div class="t" style="left:977px;top:543.0px;font-size:11px;line-height:20px;color:#222;font-weight:normal;-webkit-text-stroke:0.15px #222;">集体经济组织</div>
<div class="cr" style="left:1045px;top:551.8px;border-top-color:#555"></div>
<div class="t" style="left:205.8px;top:565.0px;font-size:11px;line-height:20px;color:#1a1a1a;font-weight:bold;">特色类型</div>
<div class="r" style="left:267px;top:569px;width:12px;height:12px;border:1px solid #b9bdcb;border-radius:2px;box-sizing:border-box;background:#fff;z-index:2"></div>
<div class="t" style="left:282px;top:565.0px;font-size:11px;line-height:20px;color:#222;font-weight:normal;-webkit-text-stroke:0.15px #222;">全选</div>
<div class="r" style="left:383px;top:569px;width:12px;height:12px;border:1px solid #b9bdcb;border-radius:2px;box-sizing:border-box;background:#fff;z-index:2"></div>
<div class="t" style="left:398px;top:565.0px;font-size:11px;line-height:20px;color:#222;font-weight:normal;-webkit-text-stroke:0.15px #222;">乡村振兴</div>
<div class="cr" style="left:444px;top:573.8px;border-top-color:#555"></div>
<div class="r" style="left:499px;top:569px;width:12px;height:12px;border:1px solid #b9bdcb;border-radius:2px;box-sizing:border-box;background:#fff;z-index:2"></div>
<div class="t" style="left:514px;top:565.0px;font-size:11px;line-height:20px;color:#222;font-weight:normal;-webkit-text-stroke:0.15px #222;">协会</div>
<div class="cr" style="left:538px;top:573.8px;border-top-color:#555"></div>
<div class="r" style="left:615px;top:569px;width:12px;height:12px;border:1px solid #b9bdcb;border-radius:2px;box-sizing:border-box;background:#fff;z-index:2"></div>
<div class="t" style="left:630px;top:565.0px;font-size:11px;line-height:20px;color:#222;font-weight:normal;-webkit-text-stroke:0.15px #222;">金融机构</div>
<div class="cr" style="left:676px;top:573.8px;border-top-color:#555"></div>
<div class="r" style="left:731px;top:569px;width:12px;height:12px;border:1px solid #b9bdcb;border-radius:2px;box-sizing:border-box;background:#fff;z-index:2"></div>
<div class="t" style="left:746px;top:565.0px;font-size:11px;line-height:20px;color:#222;font-weight:normal;-webkit-text-stroke:0.15px #222;">外贸企业</div>
<div class="r" style="left:846px;top:569px;width:12px;height:12px;border:1px solid #b9bdcb;border-radius:2px;box-sizing:border-box;background:#fff;z-index:2"></div>
<div class="t" style="left:861px;top:565.0px;font-size:11px;line-height:20px;color:#222;font-weight:normal;-webkit-text-stroke:0.15px #222;">污染型企业</div>
<div class="r" style="left:962px;top:569px;width:12px;height:12px;border:1px solid #b9bdcb;border-radius:2px;box-sizing:border-box;background:#fff;z-index:2"></div>
<div class="t" style="left:977px;top:565.0px;font-size:11px;line-height:20px;color:#222;font-weight:normal;-webkit-text-stroke:0.15px #222;">业务概念</div>
<div class="cr" style="left:1023px;top:573.8px;border-top-color:#555"></div>
<div class="r" style="left:1078px;top:569px;width:12px;height:12px;border:1px solid #b9bdcb;border-radius:2px;box-sizing:border-box;background:#fff;z-index:2"></div>
<div class="t" style="left:1093px;top:565.0px;font-size:11px;line-height:20px;color:#222;font-weight:normal;-webkit-text-stroke:0.15px #222;">政府采购代理机构</div>
<div class="r" style="left:1194px;top:569px;width:12px;height:12px;border:1px solid #b9bdcb;border-radius:2px;box-sizing:border-box;background:#fff;z-index:2"></div>
<div class="t" style="left:1209px;top:565.0px;font-size:11px;line-height:20px;color:#222;font-weight:normal;-webkit-text-stroke:0.15px #222;">CNAS认证</div>
<div class="cr" style="left:1262.48px;top:573.8px;border-top-color:#555"></div>
<div class="r" style="left:195px;top:592px;width:1725px;height:29px;background:#f6f8fc"></div>
<div class="r" style="left:196px;top:601.5px;width:1px;height:10px;background:#5b86f5"></div>
<div class="t" style="left:204px;top:596.0px;font-size:11px;line-height:20px;color:#111;font-weight:bold;">经营信息</div>
<div class="t" style="left:1864px;top:596.5px;font-size:11px;line-height:20px;color:#5d6173;font-weight:normal;">收起</div>
<svg class="r" style="left:1889.5px;top:604.5px" width="8" height="6" viewBox="0 0 8 6"><path d="M0.4 5.6 L4 1 L7.6 5.6" fill="none" stroke="#6a6e80" stroke-width="0.9"/></svg>
<div class="r" style="left:195px;top:621px;width:1725px;height:95px;background:#fff"></div>
<div class="t" style="left:205.8px;top:624.5px;font-size:11px;line-height:20px;color:#1a1a1a;font-weight:bold;">经营信息</div>
<div class="r" style="left:267px;top:628.5px;width:12px;height:12px;border:1px solid #b9bdcb;border-radius:2px;box-sizing:border-box;background:#fff;z-index:2"></div>
<div class="t" style="left:282px;top:624.5px;font-size:11px;line-height:20px;color:#222;font-weight:normal;-webkit-text-stroke:0.15px #222;">香橼树得分</div>
<div class="cr" style="left:339px;top:633.3px;border-top-color:#555"></div>
<div class="r" style="left:383px;top:628.5px;width:12px;height:12px;border:1px solid #b9bdcb;border-radius:50%;box-sizing:border-box;background:#fff;z-index:2"></div>
<div class="t" style="left:398px;top:624.5px;font-size:11px;line-height:20px;color:#222;font-weight:normal;-webkit-text-stroke:0.15px #222;">开户信息</div>
<div class="cr" style="left:444px;top:633.3px;border-top-color:#555"></div>
<div class="hp" style="left:451px;top:629.5px">?</div>
<div class="r" style="left:499px;top:628.5px;width:12px;height:12px;border:1px solid #b9bdcb;border-radius:2px;box-sizing:border-box;background:#fff;z-index:2"></div>
<div class="t" style="left:514px;top:624.5px;font-size:11px;line-height:20px;color:#222;font-weight:normal;-webkit-text-stroke:0.15px #222;">参保人数</div>
<div class="cr" style="left:560px;top:633.3px;border-top-color:#555"></div>
<div class="r" style="left:615px;top:628.5px;width:12px;height:12px;border:1px solid #b9bdcb;border-radius:2px;box-sizing:border-box;background:#fff;z-index:2"></div>
<div class="t" style="left:630px;top:624.5px;font-size:11px;line-height:20px;color:#222;font-weight:normal;-webkit-text-stroke:0.15px #222;">税务资质</div>
<div class="cr" style="left:676px;top:633.3px;border-top-color:#555"></div>
<div class="r" style="left:731px;top:628.5px;width:12px;height:12px;border:1px solid #b9bdcb;border-radius:2px;box-sizing:border-box;background:#fff;z-index:2"></div>
<div class="t" style="left:746px;top:624.5px;font-size:11px;line-height:20px;color:#222;font-weight:normal;-webkit-text-stroke:0.15px #222;">进出口信息</div>
<div class="cr" style="left:803px;top:633.3px;border-top-color:#555"></div>
<div class="r" style="left:846px;top:628.5px;width:12px;height:12px;border:1px solid #b9bdcb;border-radius:2px;box-sizing:border-box;background:#fff;z-index:2"></div>
<div class="t" style="left:861px;top:624.5px;font-size:11px;line-height:20px;color:#222;font-weight:normal;-webkit-text-stroke:0.15px #222;">烟草许可证</div>
<div class="hp" style="left:916px;top:629.5px">?</div>
<div class="r" style="left:962px;top:628.5px;width:12px;height:12px;border:1px solid #b9bdcb;border-radius:50%;box-sizing:border-box;background:#fff;z-index:2"></div>
<div class="t" style="left:977px;top:624.5px;font-size:11px;line-height:20px;color:#222;font-weight:normal;-webkit-text-stroke:0.15px #222;">疑代记账企业</div>
<div class="cr" style="left:1045px;top:633.3px;border-top-color:#555"></div>
<div class="r" style="left:1078px;top:628.5px;width:12px;height:12px;border:1px solid #b9bdcb;border-radius:50%;box-sizing:border-box;background:#fff;z-index:2"></div>
<div class="t" style="left:1093px;top:624.5px;font-size:11px;line-height:20px;color:#222;font-weight:normal;-webkit-text-stroke:0.15px #222;">筛选分公司</div>
<div class="cr" style="left:1150px;top:633.3px;border-top-color:#555"></div>
<div class="t" style="left:205.8px;top:647.0px;font-size:11px;line-height:20px;color:#1a1a1a;font-weight:bold;">经营增长</div>
<div class="hp" style="left:251px;top:652px">?</div>
<div class="r" style="left:267px;top:651px;width:12px;height:12px;border:1px solid #b9bdcb;border-radius:2px;box-sizing:border-box;background:#fff;z-index:2"></div>
<div class="t" style="left:282px;top:647.0px;font-size:11px;line-height:20px;color:#222;font-weight:normal;-webkit-text-stroke:0.15px #222;">全选</div>
<div class="r" style="left:383px;top:651px;width:12px;height:12px;border:1px solid #b9bdcb;border-radius:2px;box-sizing:border-box;background:#fff;z-index:2"></div>
<div class="t" style="left:398px;top:647.0px;font-size:11px;line-height:20px;color:#222;font-weight:normal;-webkit-text-stroke:0.15px #222;">技术领先</div>
<div class="cr" style="left:444px;top:655.8px;border-top-color:#555"></div>
<div class="r" style="left:499px;top:651px;width:12px;height:12px;border:1px solid #b9bdcb;border-radius:2px;box-sizing:border-box;background:#fff;z-index:2"></div>
<div class="t" style="left:514px;top:647.0px;font-size:11px;line-height:20px;color:#222;font-weight:normal;-webkit-text-stroke:0.15px #222;">资金扩张</div>
<div class="cr" style="left:560px;top:655.8px;border-top-color:#555"></div>
<div class="r" style="left:615px;top:651px;width:12px;height:12px;border:1px solid #b9bdcb;border-radius:2px;box-sizing:border-box;background:#fff;z-index:2"></div>
<div class="t" style="left:630px;top:647.0px;font-size:11px;line-height:20px;color:#222;font-weight:normal;-webkit-text-stroke:0.15px #222;">业务扩张</div>
<div class="cr" style="left:676px;top:655.8px;border-top-color:#555"></div>
<div class="r" style="left:731px;top:651px;width:12px;height:12px;border:1px solid #b9bdcb;border-radius:2px;box-sizing:border-box;background:#fff;z-index:2"></div>
<div class="t" style="left:746px;top:647.0px;font-size:11px;line-height:20px;color:#222;font-weight:normal;-webkit-text-stroke:0.15px #222;">人员扩张</div>
<div class="cr" style="left:792px;top:655.8px;border-top-color:#555"></div>
<div class="r" style="left:846px;top:651px;width:12px;height:12px;border:1px solid #b9bdcb;border-radius:2px;box-sizing:border-box;background:#fff;z-index:2"></div>
<div class="t" style="left:861px;top:647.0px;font-size:11px;line-height:20px;color:#222;font-weight:normal;-webkit-text-stroke:0.15px #222;">地域扩张</div>
<div class="cr" style="left:907px;top:655.8px;border-top-color:#555"></div>
<div class="r" style="left:962px;top:651px;width:12px;height:12px;border:1px solid #b9bdcb;border-radius:2px;box-sizing:border-box;background:#fff;z-index:2"></div>
<div class="t" style="left:977px;top:647.0px;font-size:11px;line-height:20px;color:#222;font-weight:normal;-webkit-text-stroke:0.15px #222;">供应商企业</div>
<div class="cr" style="left:1034px;top:655.8px;border-top-color:#555"></div>
<div class="r" style="left:1078px;top:651px;width:12px;height:12px;border:1px solid #b9bdcb;border-radius:2px;box-sizing:border-box;background:#fff;z-index:2"></div>
<div class="t" style="left:1093px;top:647.0px;font-size:11px;line-height:20px;color:#222;font-weight:normal;-webkit-text-stroke:0.15px #222;">政府扶持和奖励</div>
<div class="cr" style="left:1172px;top:655.8px;border-top-color:#555"></div>
<div class="r" style="left:1194px;top:651px;width:12px;height:12px;border:1px solid #b9bdcb;border-radius:2px;box-sizing:border-box;background:#fff;z-index:2"></div>
<div class="t" style="left:1209px;top:647.0px;font-size:11px;line-height:20px;color:#222;font-weight:normal;-webkit-text-stroke:0.15px #222;">企业榜单</div>
<div class="cr" style="left:1255px;top:655.8px;border-top-color:#555"></div>
<div class="t" style="left:205.8px;top:668.0px;font-size:11px;line-height:20px;color:#1a1a1a;font-weight:bold;">知识产权</div>
<div class="r" style="left:267px;top:672px;width:12px;height:12px;border:1px solid #b9bdcb;border-radius:50%;box-sizing:border-box;background:#fff;z-index:2"></div>
<div class="t" style="left:282px;top:668.0px;font-size:11px;line-height:20px;color:#222;font-weight:normal;-webkit-text-stroke:0.15px #222;">专利信息</div>
<div class="cr" style="left:328px;top:676.8px;border-top-color:#555"></div>
<div class="r" style="left:383px;top:672px;width:12px;height:12px;border:1px solid #b9bdcb;border-radius:2px;box-sizing:border-box;background:#fff;z-index:2"></div>
<div class="t" style="left:398px;top:668.0px;font-size:11px;line-height:20px;color:#222;font-weight:normal;-webkit-text-stroke:0.15px #222;">专利类型</div>
<div class="cr" style="left:444px;top:676.8px;border-top-color:#555"></div>
<div class="r" style="left:499px;top:672px;width:12px;height:12px;border:1px solid #b9bdcb;border-radius:2px;box-sizing:border-box;background:#fff;z-index:2"></div>
<div class="t" style="left:514px;top:668.0px;font-size:11px;line-height:20px;color:#222;font-weight:normal;-webkit-text-stroke:0.15px #222;">国标PCT</div>
<div class="r" style="left:615px;top:672px;width:12px;height:12px;border:1px solid #b9bdcb;border-radius:50%;box-sizing:border-box;background:#fff;z-index:2"></div>
<div class="t" style="left:630px;top:668.0px;font-size:11px;line-height:20px;color:#222;font-weight:normal;-webkit-text-stroke:0.15px #222;">著作权</div>
<div class="cr" style="left:665px;top:676.8px;border-top-color:#555"></div>
<div class="r" style="left:731px;top:672px;width:12px;height:12px;border:1px solid #b9bdcb;border-radius:50%;box-sizing:border-box;background:#fff;z-index:2"></div>
<div class="t" style="left:746px;top:668.0px;font-size:11px;line-height:20px;color:#222;font-weight:normal;-webkit-text-stroke:0.15px #222;">商标信息</div>
<div class="cr" style="left:792px;top:676.8px;border-top-color:#555"></div>
<div class="r" style="left:846px;top:672px;width:12px;height:12px;border:1px solid #b9bdcb;border-radius:2px;box-sizing:border-box;background:#fff;z-index:2"></div>
<div class="t" style="left:861px;top:668.0px;font-size:11px;line-height:20px;color:#222;font-weight:normal;-webkit-text-stroke:0.15px #222;">网站</div>
<div class="r" style="left:962px;top:672px;width:12px;height:12px;border:1px solid #b9bdcb;border-radius:2px;box-sizing:border-box;background:#fff;z-index:2"></div>
<div class="t" style="left:977px;top:668.0px;font-size:11px;line-height:20px;color:#222;font-weight:normal;-webkit-text-stroke:0.15px #222;">标准起草单位</div>
<div class="cr" style="left:1045px;top:676.8px;border-top-color:#555"></div>
<div class="r" style="left:1078px;top:672px;width:12px;height:12px;border:1px solid #b9bdcb;border-radius:2px;box-sizing:border-box;background:#fff;z-index:2"></div>
<div class="t" style="left:1093px;top:668.0px;font-size:11px;line-height:20px;color:#222;font-weight:normal;-webkit-text-stroke:0.15px #222;">集成电路布图</div>
<div class="r" style="left:1194px;top:672px;width:12px;height:12px;border:1px solid #b9bdcb;border-radius:2px;box-sizing:border-box;background:#fff;z-index:2"></div>
<div class="t" style="left:1209px;top:668.0px;font-size:11px;line-height:20px;color:#222;font-weight:normal;-webkit-text-stroke:0.15px #222;">游戏版号审批</div>
<div class="t" style="left:205.8px;top:689.5px;font-size:11px;line-height:20px;color:#1a1a1a;font-weight:bold;">资质证书</div>
<div class="r" style="left:267px;top:693.5px;width:12px;height:12px;border:1px solid #b9bdcb;border-radius:2px;box-sizing:border-box;background:#fff;z-index:2"></div>
<div class="t" style="left:282px;top:689.5px;font-size:11px;line-height:20px;color:#222;font-weight:normal;-webkit-text-stroke:0.15px #222;">全选</div>
<div class="r" style="left:383px;top:693.5px;width:12px;height:12px;border:1px solid #b9bdcb;border-radius:2px;box-sizing:border-box;background:#fff;z-index:2"></div>
<div class="t" style="left:398px;top:689.5px;font-size:11px;line-height:20px;color:#222;font-weight:normal;-webkit-text-stroke:0.15px #222;">建筑工程类认证</div>
<div class="cr" style="left:477px;top:698.3px;border-top-color:#555"></div>
<div class="r" style="left:499px;top:693.5px;width:12px;height:12px;border:1px solid #b9bdcb;border-radius:2px;box-sizing:border-box;background:#fff;z-index:2"></div>
<div class="t" style="left:514px;top:689.5px;font-size:11px;line-height:20px;color:#222;font-weight:normal;-webkit-text-stroke:0.15px #222;">环保类认证</div>
<div class="cr" style="left:571px;top:698.3px;border-top-color:#555"></div>
<div class="r" style="left:615px;top:693.5px;width:12px;height:12px;border:1px solid #b9bdcb;border-radius:2px;box-sizing:border-box;background:#fff;z-index:2"></div>
<div class="t" style="left:630px;top:689.5px;font-size:11px;line-height:20px;color:#222;font-weight:normal;-webkit-text-stroke:0.15px #222;">医疗器械类认证</div>
<div class="cr" style="left:709px;top:698.3px;border-top-color:#555"></div>
<div class="r" style="left:731px;top:693.5px;width:12px;height:12px;border:1px solid #b9bdcb;border-radius:2px;box-sizing:border-box;background:#fff;z-index:2"></div>
<div class="t" style="left:746px;top:689.5px;font-size:11px;line-height:20px;color:#222;font-weight:normal;-webkit-text-stroke:0.15px #222;">药品类认证</div>
<div class="cr" style="left:803px;top:698.3px;border-top-color:#555"></div>
<div class="r" style="left:846px;top:693.5px;width:12px;height:12px;border:1px solid #b9bdcb;border-radius:2px;box-sizing:border-box;background:#fff;z-index:2"></div>
<div class="t" style="left:861px;top:689.5px;font-size:11px;line-height:20px;color:#222;font-weight:normal;-webkit-text-stroke:0.15px #222;">国家推行的工...</div>
<div class="cr" style="left:945.5px;top:698.3px;border-top-color:#555"></div>
<div class="r" style="left:962px;top:693.5px;width:12px;height:12px;border:1px solid #b9bdcb;border-radius:2px;box-sizing:border-box;background:#fff;z-index:2"></div>
<div class="t" style="left:977px;top:689.5px;font-size:11px;line-height:20px;color:#222;font-weight:normal;-webkit-text-stroke:0.15px #222;">食品农产品认证</div>
<div class="cr" style="left:1056px;top:698.3px;border-top-color:#555"></div>
<div class="r" style="left:1078px;top:693.5px;width:12px;height:12px;border:1px solid #b9bdcb;border-radius:2px;box-sizing:border-box;background:#fff;z-index:2"></div>
<div class="t" style="left:1093px;top:689.5px;font-size:11px;line-height:20px;color:#222;font-weight:normal;-webkit-text-stroke:0.15px #222;">化妆品类认证</div>
<div class="cr" style="left:1161px;top:698.3px;border-top-color:#555"></div>
<div class="r" style="left:1194px;top:693.5px;width:12px;height:12px;border:1px solid #b9bdcb;border-radius:2px;box-sizing:border-box;background:#fff;z-index:2"></div>
<div class="t" style="left:1209px;top:689.5px;font-size:11px;line-height:20px;color:#222;font-weight:normal;-webkit-text-stroke:0.15px #222;">管理体系认证</div>
<div class="cr" style="left:1277px;top:698.3px;border-top-color:#555"></div>
<div class="r" style="left:1310px;top:693.5px;width:12px;height:12px;border:1px solid #b9bdcb;border-radius:2px;box-sizing:border-box;background:#fff;z-index:2"></div>
<div class="t" style="left:1325px;top:689.5px;font-size:11px;line-height:20px;color:#222;font-weight:normal;-webkit-text-stroke:0.15px #222;">服务认证</div>
<div class="cr" style="left:1371px;top:698.3px;border-top-color:#555"></div>
<div class="r" style="left:1426px;top:693.5px;width:12px;height:12px;border:1px solid #b9bdcb;border-radius:2px;box-sizing:border-box;background:#fff;z-index:2"></div>
<div class="t" style="left:1441px;top:689.5px;font-size:11px;line-height:20px;color:#222;font-weight:normal;-webkit-text-stroke:0.15px #222;">电子信息类认证</div>
<div class="cr" style="left:1520px;top:698.3px;border-top-color:#555"></div>
<div class="r" style="left:1542px;top:693.5px;width:12px;height:12px;border:1px solid #b9bdcb;border-radius:2px;box-sizing:border-box;background:#fff;z-index:2"></div>
<div class="t" style="left:1557px;top:689.5px;font-size:11px;line-height:20px;color:#222;font-weight:normal;-webkit-text-stroke:0.15px #222;">自然资源相关...</div>
<div class="cr" style="left:1641.5px;top:698.3px;border-top-color:#555"></div>
<div class="r" style="left:1657px;top:693.5px;width:12px;height:12px;border:1px solid #b9bdcb;border-radius:2px;box-sizing:border-box;background:#fff;z-index:2"></div>
<div class="t" style="left:1672px;top:689.5px;font-size:11px;line-height:20px;color:#222;font-weight:normal;-webkit-text-stroke:0.15px #222;">其他资质认证</div>
<div class="cr" style="left:1740px;top:698.3px;border-top-color:#555"></div>
<div class="r" style="left:195px;top:716px;width:1725px;height:29px;background:#f6f8fc"></div>
<div class="r" style="left:196px;top:725.5px;width:1px;height:10px;background:#5b86f5"></div>
<div class="t" style="left:204px;top:720.0px;font-size:11px;line-height:20px;color:#111;font-weight:bold;">科创筛选</div>
<div class="t" style="left:1864px;top:720.5px;font-size:11px;line-height:20px;color:#5d6173;font-weight:normal;">收起</div>
<svg class="r" style="left:1889.5px;top:728.5px" width="8" height="6" viewBox="0 0 8 6"><path d="M0.4 5.6 L4 1 L7.6 5.6" fill="none" stroke="#6a6e80" stroke-width="0.9"/></svg>
<div class="r" style="left:195px;top:745px;width:1725px;height:95px;background:#fff"></div>
<div class="t" style="left:205.8px;top:748.0px;font-size:11px;line-height:20px;color:#1a1a1a;font-weight:bold;">科技认定</div>
<div class="r" style="left:267px;top:750.5px;width:105px;height:16.2px;background:#f2f3fa;border-radius:3px"></div>
<div class="t" style="left:270px;top:748.0px;font-size:11px;line-height:20px;color:#222;font-weight:normal;-webkit-text-stroke:0.15px #222;">条件关系<span style="display:inline-block;width:11px;text-indent:1.5px">:</span>包含</div>
<div class="cr" style="left:350px;top:756.5px;border-top-color:#444;border-left-width:3px;border-right-width:3px;border-top-width:4px"></div>
<div class="r" style="left:383px;top:752px;width:12px;height:12px;border:1px solid #b9bdcb;border-radius:2px;box-sizing:border-box;background:#fff;z-index:2"></div>
<div class="t" style="left:398px;top:748.0px;font-size:11px;line-height:20px;color:#222;font-weight:normal;-webkit-text-stroke:0.15px #222;">全选</div>
<div class="r" style="left:499px;top:752px;width:12px;height:12px;border:1px solid #b9bdcb;border-radius:2px;box-sizing:border-box;background:#fff;z-index:2"></div>
<div class="t" style="left:514px;top:748.0px;font-size:11px;line-height:20px;color:#222;font-weight:normal;-webkit-text-stroke:0.15px #222;">专精特新</div>
<div class="cr" style="left:560px;top:756.8px;border-top-color:#555"></div>
<div class="r" style="left:615px;top:752px;width:12px;height:12px;border:1px solid #b9bdcb;border-radius:2px;box-sizing:border-box;background:#fff;z-index:2"></div>
<div class="t" style="left:630px;top:748.0px;font-size:11px;line-height:20px;color:#222;font-weight:normal;-webkit-text-stroke:0.15px #222;">专精特新小巨人</div>
<div class="cr" style="left:709px;top:756.8px;border-top-color:#555"></div>
<div class="r" style="left:731px;top:752px;width:12px;height:12px;border:1px solid #b9bdcb;border-radius:2px;box-sizing:border-box;background:#fff;z-index:2"></div>
<div class="t" style="left:746px;top:748.0px;font-size:11px;line-height:20px;color:#222;font-weight:normal;-webkit-text-stroke:0.15px #222;">科技小巨人</div>
<div class="cr" style="left:803px;top:756.8px;border-top-color:#555"></div>
<div class="r" style="left:846px;top:752px;width:12px;height:12px;border:1px solid #b9bdcb;border-radius:2px;box-sizing:border-box;background:#fff;z-index:2"></div>
<div class="t" style="left:861px;top:748.0px;font-size:11px;line-height:20px;color:#222;font-weight:normal;-webkit-text-stroke:0.15px #222;">科技型企业</div>
<div class="r" style="left:962px;top:752px;width:12px;height:12px;border:1px solid #b9bdcb;border-radius:2px;box-sizing:border-box;background:#fff;z-index:2"></div>
<div class="t" style="left:977px;top:748.0px;font-size:11px;line-height:20px;color:#222;font-weight:normal;-webkit-text-stroke:0.15px #222;">科技型中小企业</div>
<div class="cr" style="left:1056px;top:756.8px;border-top-color:#555"></div>
<div class="r" style="left:1078px;top:752px;width:12px;height:12px;border:1px solid #b9bdcb;border-radius:2px;box-sizing:border-box;background:#fff;z-index:2"></div>
<div class="t" style="left:1093px;top:748.0px;font-size:11px;line-height:20px;color:#222;font-weight:normal;-webkit-text-stroke:0.15px #222;">高新企业</div>
<div class="cr" style="left:1139px;top:756.8px;border-top-color:#555"></div>
<div class="r" style="left:1194px;top:752px;width:12px;height:12px;border:1px solid #b9bdcb;border-radius:2px;box-sizing:border-box;background:#fff;z-index:2"></div>
<div class="t" style="left:1209px;top:748.0px;font-size:11px;line-height:20px;color:#222;font-weight:normal;-webkit-text-stroke:0.15px #222;">独角兽企业</div>
<div class="cr" style="left:1266px;top:756.8px;border-top-color:#555"></div>
<div class="r" style="left:1310px;top:752px;width:12px;height:12px;border:1px solid #b9bdcb;border-radius:2px;box-sizing:border-box;background:#fff;z-index:2"></div>
<div class="t" style="left:1325px;top:748.0px;font-size:11px;line-height:20px;color:#222;font-weight:normal;-webkit-text-stroke:0.15px #222;">种子独角兽企业</div>
<div class="cr" style="left:1404px;top:756.8px;border-top-color:#555"></div>
<div class="r" style="left:1426px;top:752px;width:12px;height:12px;border:1px solid #b9bdcb;border-radius:2px;box-sizing:border-box;background:#fff;z-index:2"></div>
<div class="t" style="left:1441px;top:748.0px;font-size:11px;line-height:20px;color:#222;font-weight:normal;-webkit-text-stroke:0.15px #222;">未来独角兽企业</div>
<div class="r" style="left:1542px;top:752px;width:12px;height:12px;border:1px solid #b9bdcb;border-radius:2px;box-sizing:border-box;background:#fff;z-index:2"></div>
<div class="t" style="left:1557px;top:748.0px;font-size:11px;line-height:20px;color:#222;font-weight:normal;-webkit-text-stroke:0.15px #222;">民营科技企业</div>
<div class="r" style="left:1657px;top:752px;width:12px;height:12px;border:1px solid #b9bdcb;border-radius:2px;box-sizing:border-box;background:#fff;z-index:2"></div>
<div class="t" style="left:1672px;top:748.0px;font-size:11px;line-height:20px;color:#222;font-weight:normal;-webkit-text-stroke:0.15px #222;">企业技术中心</div>
<div class="cr" style="left:1740px;top:756.8px;border-top-color:#555"></div>
<div class="r" style="left:267px;top:774px;width:12px;height:12px;border:1px solid #b9bdcb;border-radius:2px;box-sizing:border-box;background:#fff;z-index:2"></div>
<div class="t" style="left:282px;top:770.0px;font-size:11px;line-height:20px;color:#222;font-weight:normal;-webkit-text-stroke:0.15px #222;">技术创新示范...</div>
<div class="cr" style="left:366.5px;top:778.8px;border-top-color:#555"></div>
<div class="r" style="left:383px;top:774px;width:12px;height:12px;border:1px solid #b9bdcb;border-radius:2px;box-sizing:border-box;background:#fff;z-index:2"></div>
<div class="t" style="left:398px;top:770.0px;font-size:11px;line-height:20px;color:#222;font-weight:normal;-webkit-text-stroke:0.15px #222;">科改示范企业</div>
<div class="r" style="left:499px;top:774px;width:12px;height:12px;border:1px solid #b9bdcb;border-radius:2px;box-sizing:border-box;background:#fff;z-index:2"></div>
<div class="t" style="left:514px;top:770.0px;font-size:11px;line-height:20px;color:#222;font-weight:normal;-webkit-text-stroke:0.15px #222;">创新型企业</div>
<div class="cr" style="left:571px;top:778.8px;border-top-color:#555"></div>
<div class="r" style="left:615px;top:774px;width:12px;height:12px;border:1px solid #b9bdcb;border-radius:2px;box-sizing:border-box;background:#fff;z-index:2"></div>
<div class="t" style="left:630px;top:770.0px;font-size:11px;line-height:20px;color:#222;font-weight:normal;-webkit-text-stroke:0.15px #222;">创新型试点企业</div>
<div class="cr" style="left:709px;top:778.8px;border-top-color:#555"></div>
<div class="r" style="left:731px;top:774px;width:12px;height:12px;border:1px solid #b9bdcb;border-radius:2px;box-sizing:border-box;background:#fff;z-index:2"></div>
<div class="t" style="left:746px;top:770.0px;font-size:11px;line-height:20px;color:#222;font-weight:normal;-webkit-text-stroke:0.15px #222;">创新型领军企业</div>
<div class="cr" style="left:825px;top:778.8px;border-top-color:#555"></div>
<div class="r" style="left:846px;top:774px;width:12px;height:12px;border:1px solid #b9bdcb;border-radius:2px;box-sizing:border-box;background:#fff;z-index:2"></div>
<div class="t" style="left:861px;top:770.0px;font-size:11px;line-height:20px;color:#222;font-weight:normal;-webkit-text-stroke:0.15px #222;">技术先进型服...</div>
<div class="cr" style="left:945.5px;top:778.8px;border-top-color:#555"></div>
<div class="r" style="left:962px;top:774px;width:12px;height:12px;border:1px solid #b9bdcb;border-radius:2px;box-sizing:border-box;background:#fff;z-index:2"></div>
<div class="t" style="left:977px;top:770.0px;font-size:11px;line-height:20px;color:#222;font-weight:normal;-webkit-text-stroke:0.15px #222;">世界一流示范企业</div>
<div class="r" style="left:1078px;top:774px;width:12px;height:12px;border:1px solid #b9bdcb;border-radius:2px;box-sizing:border-box;background:#fff;z-index:2"></div>
<div class="t" style="left:1093px;top:770.0px;font-size:11px;line-height:20px;color:#222;font-weight:normal;-webkit-text-stroke:0.15px #222;">服务型制造示...</div>
<div class="cr" style="left:1177.5px;top:778.8px;border-top-color:#555"></div>
<div class="r" style="left:1194px;top:774px;width:12px;height:12px;border:1px solid #b9bdcb;border-radius:2px;box-sizing:border-box;background:#fff;z-index:2"></div>
<div class="t" style="left:1209px;top:770.0px;font-size:11px;line-height:20px;color:#222;font-weight:normal;-webkit-text-stroke:0.15px #222;">服务型制造示...</div>
<div class="cr" style="left:1293.5px;top:778.8px;border-top-color:#555"></div>
<div class="r" style="left:1310px;top:774px;width:12px;height:12px;border:1px solid #b9bdcb;border-radius:2px;box-sizing:border-box;background:#fff;z-index:2"></div>
<div class="t" style="left:1325px;top:770.0px;font-size:11px;line-height:20px;color:#222;font-weight:normal;-webkit-text-stroke:0.15px #222;">制造业单项冠军</div>
<div class="cr" style="left:1404px;top:778.8px;border-top-color:#555"></div>
<div class="r" style="left:1426px;top:774px;width:12px;height:12px;border:1px solid #b9bdcb;border-radius:2px;box-sizing:border-box;background:#fff;z-index:2"></div>
<div class="t" style="left:1441px;top:770.0px;font-size:11px;line-height:20px;color:#222;font-weight:normal;-webkit-text-stroke:0.15px #222;">制造业单项冠...</div>
<div class="cr" style="left:1525.5px;top:778.8px;border-top-color:#555"></div>
<div class="r" style="left:1542px;top:774px;width:12px;height:12px;border:1px solid #b9bdcb;border-radius:2px;box-sizing:border-box;background:#fff;z-index:2"></div>
<div class="t" style="left:1557px;top:770.0px;font-size:11px;line-height:20px;color:#222;font-weight:normal;-webkit-text-stroke:0.15px #222;">众创空间</div>
<div class="r" style="left:1657px;top:774px;width:12px;height:12px;border:1px solid #b9bdcb;border-radius:2px;box-sizing:border-box;background:#fff;z-index:2"></div>
<div class="t" style="left:1672px;top:770.0px;font-size:11px;line-height:20px;color:#222;font-weight:normal;-webkit-text-stroke:0.15px #222;">备案众创空间</div>
<div class="cr" style="left:1740px;top:778.8px;border-top-color:#555"></div>
<div class="r" style="left:267px;top:796px;width:12px;height:12px;border:1px solid #b9bdcb;border-radius:2px;box-sizing:border-box;background:#fff;z-index:2"></div>
<div class="t" style="left:282px;top:792.0px;font-size:11px;line-height:20px;color:#222;font-weight:normal;-webkit-text-stroke:0.15px #222;">科技企业孵化器</div>
<div class="cr" style="left:361px;top:800.8px;border-top-color:#555"></div>
<div class="r" style="left:383px;top:796px;width:12px;height:12px;border:1px solid #b9bdcb;border-radius:2px;box-sizing:border-box;background:#fff;z-index:2"></div>
<div class="t" style="left:398px;top:792.0px;font-size:11px;line-height:20px;color:#222;font-weight:normal;-webkit-text-stroke:0.15px #222;">火炬计划项目</div>
<div class="r" style="left:499px;top:796px;width:12px;height:12px;border:1px solid #b9bdcb;border-radius:2px;box-sizing:border-box;background:#fff;z-index:2"></div>
<div class="t" style="left:514px;top:792.0px;font-size:11px;line-height:20px;color:#222;font-weight:normal;-webkit-text-stroke:0.15px #222;">上市后备企业</div>
<div class="cr" style="left:582px;top:800.8px;border-top-color:#555"></div>
<div class="r" style="left:615px;top:796px;width:12px;height:12px;border:1px solid #b9bdcb;border-radius:2px;box-sizing:border-box;background:#fff;z-index:2"></div>
<div class="t" style="left:630px;top:792.0px;font-size:11px;line-height:20px;color:#222;font-weight:normal;-webkit-text-stroke:0.15px #222;">隐形冠军</div>
<div class="cr" style="left:676px;top:800.8px;border-top-color:#555"></div>
<div class="r" style="left:731px;top:796px;width:12px;height:12px;border:1px solid #b9bdcb;border-radius:2px;box-sizing:border-box;background:#fff;z-index:2"></div>
<div class="t" style="left:746px;top:792.0px;font-size:11px;line-height:20px;color:#222;font-weight:normal;-webkit-text-stroke:0.15px #222;">雏鹰企业</div>
<div class="cr" style="left:792px;top:800.8px;border-top-color:#555"></div>
<div class="r" style="left:846px;top:796px;width:12px;height:12px;border:1px solid #b9bdcb;border-radius:2px;box-sizing:border-box;background:#fff;z-index:2"></div>
<div class="t" style="left:861px;top:792.0px;font-size:11px;line-height:20px;color:#222;font-weight:normal;-webkit-text-stroke:0.15px #222;">绿色企业</div>
<div class="cr" style="left:907px;top:800.8px;border-top-color:#555"></div>
<div class="r" style="left:962px;top:796px;width:12px;height:12px;border:1px solid #b9bdcb;border-radius:2px;box-sizing:border-box;background:#fff;z-index:2"></div>
<div class="t" style="left:977px;top:792.0px;font-size:11px;line-height:20px;color:#222;font-weight:normal;-webkit-text-stroke:0.15px #222;">瞪羚企业</div>
<div class="r" style="left:1078px;top:796px;width:12px;height:12px;border:1px solid #b9bdcb;border-radius:2px;box-sizing:border-box;background:#fff;z-index:2"></div>
<div class="t" style="left:1093px;top:792.0px;font-size:11px;line-height:20px;color:#222;font-weight:normal;-webkit-text-stroke:0.15px #222;">牛羚企业</div>
<div class="t" style="left:205.8px;top:814.0px;font-size:11px;line-height:20px;color:#1a1a1a;font-weight:bold;">科创等级</div>
<div class="hp" style="left:251px;top:819px">?</div>
<div class="r" style="left:267px;top:816.5px;width:105px;height:16.2px;background:#f2f3fa;border-radius:3px"></div>
<div class="t" style="left:270px;top:814.0px;font-size:11px;line-height:20px;color:#222;font-weight:normal;-webkit-text-stroke:0.15px #222;">条件关系<span style="display:inline-block;width:11px;text-indent:1.5px">:</span>包含</div>
<div class="cr" style="left:350px;top:822.5px;border-top-color:#444;border-left-width:3px;border-right-width:3px;border-top-width:4px"></div>
<div class="r" style="left:383px;top:818px;width:12px;height:12px;border:1px solid #b9bdcb;border-radius:2px;box-sizing:border-box;background:#fff;z-index:2"></div>
<div class="t" style="left:398px;top:814.0px;font-size:11px;line-height:20px;color:#222;font-weight:normal;-webkit-text-stroke:0.15px #222;">全选</div>
<div class="r" style="left:441px;top:818px;width:12px;height:12px;border:1px solid #b9bdcb;border-radius:2px;box-sizing:border-box;background:#fff;z-index:2"></div>
<div class="t" style="left:456px;top:814.0px;font-size:11px;line-height:20px;color:#222;font-weight:normal;-webkit-text-stroke:0.15px #222;">AAA</div>
<div class="r" style="left:499px;top:818px;width:12px;height:12px;border:1px solid #b9bdcb;border-radius:2px;box-sizing:border-box;background:#fff;z-index:2"></div>
<div class="t" style="left:514px;top:814.0px;font-size:11px;line-height:20px;color:#222;font-weight:normal;-webkit-text-stroke:0.15px #222;">AA</div>
<div class="r" style="left:557px;top:818px;width:12px;height:12px;border:1px solid #b9bdcb;border-radius:2px;box-sizing:border-box;background:#fff;z-index:2"></div>
<div class="t" style="left:572px;top:814.0px;font-size:11px;line-height:20px;color:#222;font-weight:normal;-webkit-text-stroke:0.15px #222;">A</div>
<div class="r" style="left:615px;top:818px;width:12px;height:12px;border:1px solid #b9bdcb;border-radius:2px;box-sizing:border-box;background:#fff;z-index:2"></div>
<div class="t" style="left:630px;top:814.0px;font-size:11px;line-height:20px;color:#222;font-weight:normal;-webkit-text-stroke:0.15px #222;">BBB</div>
<div class="r" style="left:673px;top:818px;width:12px;height:12px;border:1px solid #b9bdcb;border-radius:2px;box-sizing:border-box;background:#fff;z-index:2"></div>
<div class="t" style="left:688px;top:814.0px;font-size:11px;line-height:20px;color:#222;font-weight:normal;-webkit-text-stroke:0.15px #222;">BB</div>
<div class="r" style="left:731px;top:818px;width:12px;height:12px;border:1px solid #b9bdcb;border-radius:2px;box-sizing:border-box;background:#fff;z-index:2"></div>
<div class="t" style="left:746px;top:814.0px;font-size:11px;line-height:20px;color:#222;font-weight:normal;-webkit-text-stroke:0.15px #222;">B</div>
<div class="r" style="left:789px;top:818px;width:12px;height:12px;border:1px solid #b9bdcb;border-radius:2px;box-sizing:border-box;background:#fff;z-index:2"></div>
<div class="t" style="left:804px;top:814.0px;font-size:11px;line-height:20px;color:#222;font-weight:normal;-webkit-text-stroke:0.15px #222;">CCC</div>
<div class="r" style="left:847px;top:818px;width:12px;height:12px;border:1px solid #b9bdcb;border-radius:2px;box-sizing:border-box;background:#fff;z-index:2"></div>
<div class="t" style="left:862px;top:814.0px;font-size:11px;line-height:20px;color:#222;font-weight:normal;-webkit-text-stroke:0.15px #222;">CC</div>
<div class="r" style="left:905px;top:818px;width:12px;height:12px;border:1px solid #b9bdcb;border-radius:2px;box-sizing:border-box;background:#fff;z-index:2"></div>
<div class="t" style="left:920px;top:814.0px;font-size:11px;line-height:20px;color:#222;font-weight:normal;-webkit-text-stroke:0.15px #222;">C</div>
<div class="r" style="left:962px;top:818px;width:12px;height:12px;border:1px solid #b9bdcb;border-radius:2px;box-sizing:border-box;background:#fff;z-index:2"></div>
<div class="t" style="left:977px;top:814.0px;font-size:11px;line-height:20px;color:#222;font-weight:normal;-webkit-text-stroke:0.15px #222;">科创分筛选</div>
<div class="cr" style="left:1034px;top:822.8px;border-top-color:#555"></div>
<div class="r" style="left:195px;top:840px;width:1725px;height:29px;background:#f6f8fc"></div>
<div class="r" style="left:196px;top:849.5px;width:1px;height:10px;background:#5b86f5"></div>
<div class="t" style="left:204px;top:844.0px;font-size:11px;line-height:20px;color:#111;font-weight:bold;">资本市场</div>
<div class="t" style="left:1864px;top:844.5px;font-size:11px;line-height:20px;color:#5d6173;font-weight:normal;">收起</div>
<svg class="r" style="left:1889.5px;top:852.5px" width="8" height="6" viewBox="0 0 8 6"><path d="M0.4 5.6 L4 1 L7.6 5.6" fill="none" stroke="#6a6e80" stroke-width="0.9"/></svg>
<div class="r" style="left:195px;top:869px;width:1725px;height:22px;background:#fff"></div>
<div class="t" style="left:205.8px;top:873.0px;font-size:11px;line-height:20px;color:#1a1a1a;font-weight:bold;">创投融资</div>
<div class="r" style="left:267px;top:877px;width:12px;height:12px;border:1px solid #b9bdcb;border-radius:50%;box-sizing:border-box;background:#fff;z-index:2"></div>
<div class="t" style="left:282px;top:873.0px;font-size:11px;line-height:20px;color:#222;font-weight:normal;-webkit-text-stroke:0.15px #222;">有无融资</div>
<div class="cr" style="left:328px;top:881.8px;border-top-color:#555"></div>
<div class="r" style="left:383px;top:877px;width:12px;height:12px;border:1px solid #b9bdcb;border-radius:2px;box-sizing:border-box;background:#fff;z-index:2"></div>
<div class="t" style="left:398px;top:873.0px;font-size:11px;line-height:20px;color:#222;font-weight:normal;-webkit-text-stroke:0.15px #222;">融资轮次</div>
<div class="cr" style="left:444px;top:881.8px;border-top-color:#555"></div>
<div class="r" style="left:499px;top:877px;width:12px;height:12px;border:1px solid #b9bdcb;border-radius:2px;box-sizing:border-box;background:#fff;z-index:2"></div>
<div class="t" style="left:514px;top:873.0px;font-size:11px;line-height:20px;color:#222;font-weight:normal;-webkit-text-stroke:0.15px #222;">融资特征</div>
<div class="cr" style="left:560px;top:881.8px;border-top-color:#555"></div>
<div style="position:absolute;left:0;top:0;z-index:5">
<div class="r" style="left:1564px;top:262px;width:273.5px;height:235.5px;background:#fff;border:1px solid #d9dbe2;box-sizing:border-box;box-shadow:3px 3px 12px rgba(0,0,0,0.2)"></div>
<div class="r" style="left:1572px;top:270px;width:258px;height:23px;background:#eef4fd"></div>
<svg class="r" style="left:1574.5px;top:275.5px" width="12" height="12" viewBox="0 0 12 12"><path d="M2.2 8.6 A4.3 4.3 0 1 1 5.2 10.4" fill="none" stroke="#1e88f0" stroke-width="1.9"/><path d="M0.6 7.2 L4.2 7.6 L2 10.6Z" fill="#1e88f0"/><circle cx="4.6" cy="10.6" r="0.9" fill="#1e88f0"/></svg>
<div class="t" style="left:1590px;top:271.5px;font-size:11px;line-height:20px;color:#222;font-weight:normal;">号码助手</div>
<div class="t" style="left:1804px;top:271.5px;font-size:10px;line-height:20px;color:#aaa;font-weight:normal;">[隐藏]</div>
<div class="r" style="left:1572px;top:299.5px;width:258px;height:25px;border:1px solid #d4d6dc;border-radius:3px;box-sizing:border-box;background:#fff"></div>
<div class="t" style="left:1581.5px;top:302.0px;font-size:10px;line-height:20px;color:#b8bbc6;font-weight:normal;">请输入企业名字</div>
<div class="r" style="left:1572px;top:330px;width:60px;height:20px;background:#a0cbf7;border-radius:3px"></div>
<div class="t" style="left:1581.5px;top:330.0px;font-size:10px;line-height:20px;color:#fff;font-weight:normal;">发送短信</div>
<div class="r" style="left:1642px;top:330px;width:60px;height:20px;background:#a0cbf7;border-radius:3px"></div>
<div class="t" style="left:1651.5px;top:330.0px;font-size:10px;line-height:20px;color:#fff;font-weight:normal;">发送邮件</div>
<div class="r" style="left:1713px;top:330px;width:60px;height:20px;background:#a0cbf7;border-radius:3px"></div>
<div class="t" style="left:1722.5px;top:330.0px;font-size:10px;line-height:20px;color:#fff;font-weight:normal;">转为线索</div>
<div class="r" style="left:1572px;top:357px;width:258px;height:76.5px;border:1px solid #ebeef5;box-sizing:border-box;border-right:none"></div>
<div class="r" style="left:1829px;top:357px;width:1px;height:27px;background:#ebeef5"></div>
<div class="r" style="left:1572px;top:383.5px;width:258px;height:1px;background:#ebeef5"></div>
<div class="r" style="left:1696px;top:357px;width:1px;height:27px;background:#ebeef5"></div>
<div class="t" style="left:1619.5px;top:360.0px;font-size:10px;line-height:20px;color:#666;font-weight:normal;">联系人</div>
<div class="t" style="left:1753px;top:360.0px;font-size:10px;line-height:20px;color:#666;font-weight:normal;">号码</div>
<div class="t" style="left:1681px;top:398.5px;font-size:10px;line-height:20px;color:#999;font-weight:normal;">暂无数据</div>
<div class="t" style="left:1719px;top:455.5px;font-size:10px;line-height:20px;color:#444;font-weight:normal;">共 0 条</div>
<svg class="r" style="left:1771.5px;top:461px" width="5" height="9" viewBox="0 0 5 9"><path d="M4.5 0.5 L0.8 4.5 L4.5 8.5" fill="none" stroke="#999" stroke-width="0.9"/></svg>
<div class="t" style="left:1791px;top:455.0px;font-size:10px;line-height:20px;color:#409eff;font-weight:bold;">1</div>
<svg class="r" style="left:1812px;top:461px" width="5" height="9" viewBox="0 0 5 9"><path d="M0.5 0.5 L4.2 4.5 L0.5 8.5" fill="none" stroke="#999" stroke-width="0.9"/></svg>
</div>
<div style="position:absolute;left:0;top:0;z-index:6">
<div class="r" style="left:1911px;top:41px;width:9px;height:32px;background:#fafafa"></div>
<div class="r" style="left:1910px;top:73px;width:10px;height:806px;background:#d3d6dd;border-radius:4px"></div>
<div class="r" style="left:1910px;top:463px;width:10px;height:32px;background:#fff;border-radius:10px 0 0 10px"></div>
<svg class="r" style="left:1913px;top:474.5px" width="5" height="9" viewBox="0 0 5 9"><path d="M4.5 0.5 L0.8 4.5 L4.5 8.5" fill="none" stroke="#999" stroke-width="0.9"/></svg>
</div>
<div class="r" style="left:174px;top:889px;width:1746px;height:2px;background:#f5f7fc;z-index:1"></div>
<div class="r" style="left:1910px;top:879px;width:10px;height:12px;background:#f5f7fc;z-index:1"></div>
<div class="r" style="left:176px;top:879px;width:1736px;height:10px;background:#d9dadd;border-radius:5px;z-index:1"></div>
</body></html>
